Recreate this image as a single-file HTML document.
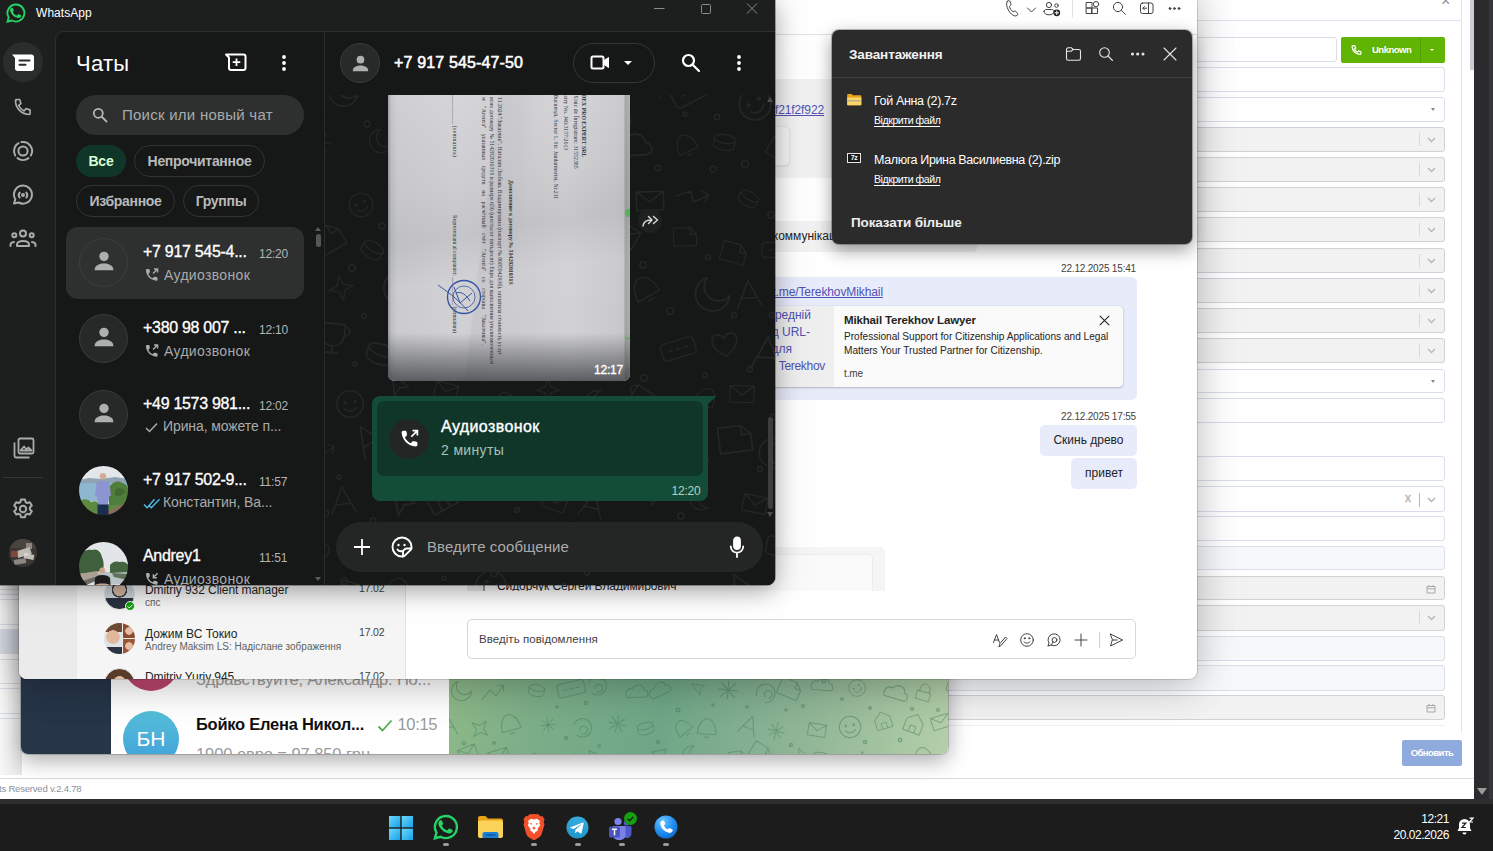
<!DOCTYPE html>
<html lang="ru">
<head>
<meta charset="utf-8">
<title>Desktop</title>
<style>
*{box-sizing:border-box;margin:0;padding:0}
html,body{width:1493px;height:851px;overflow:hidden;background:#fff}
body{position:relative;font-family:"Liberation Sans",sans-serif;color:#000}
.abs{position:absolute}
svg{display:block;overflow:visible}
/* ---------- CRM base page ---------- */
#crm{position:absolute;left:0;top:0;width:1493px;height:804px;background:#fff;overflow:hidden}
#crm .dark{position:absolute;left:1474px;top:0;width:19px;height:799px;background:linear-gradient(90deg,#2b2b2d 0,#2b2b2d 15px,#38383b 15px)}
#crm .sbthumb{position:absolute;left:1470px;top:0;width:4px;height:70px;background:#c9ccd6}
#crm .sbtrack{position:absolute;left:1462px;top:0;width:12px;height:799px;background:#fff}
#crm .pborder{position:absolute;left:1461px;top:0;width:1px;height:733px;background:#dfe4ee}
#crm .hline{position:absolute;left:1197px;top:20px;width:264px;height:1px;background:#dfe4ee}
.fld{position:absolute;left:900px;width:545px;border:1px solid #d9dfea;border-radius:3px;background:#fff}
.fld.g{background:#f2f2f2;border-color:#d0d2da}
.fld.l{background:#f7f8fa}
.fld .bar{position:absolute;right:24px;top:5px;width:1px;height:13px;background:#d9d9d9}
.fld .chev{position:absolute;right:8px;top:9px;width:9px;height:6px}
.fld .caret{position:absolute;right:9px;top:10px;width:0;height:0;border-left:2.500px solid transparent;border-right:2.500px solid transparent;border-top:3.500px solid #888}
.fld .cal{position:absolute;right:8px;top:7px;width:10px;height:10px}
#crm .foot{position:absolute;left:0;top:778px;width:1474px;height:1px;background:#d9dde6}
#crm .foottxt{position:absolute;left:-1px;top:783px;font-size:9.5px;color:#8a8f99;white-space:nowrap;letter-spacing:-0.2px}
#crm .tbl i{position:absolute;left:0;width:20px;height:1px;background:#dfe4ee;display:block}
/* ---------- taskbar ---------- */
#taskbar{position:absolute;left:0;top:799px;width:1493px;height:52px;background:#1c1c1c}
#taskbar .top{position:absolute;left:0;top:0;width:1493px;height:5px;background:#2e2e31}
#taskbar .pill{position:absolute;top:44px;width:6px;height:3px;border-radius:2px;background:#9a9a9a}
#taskbar .clock{position:absolute;right:44px;top:12px;text-align:right;font-size:12px;line-height:16px;color:#fff;letter-spacing:-0.45px}

#wa .nm{font-size:16px;color:#fff;white-space:nowrap;letter-spacing:-0.3px;-webkit-text-stroke:.32px #fff}
#wa .tm{font-size:12px;color:#b3b5b5;white-space:nowrap;letter-spacing:-0.2px}
#wa .sb{font-size:14px;color:#a9abab;white-space:nowrap;letter-spacing:-0.1px}
#wa .sb.c{letter-spacing:.33px}
</style>
</head>
<body>

<!-- ================= CRM base page ================= -->
<div id="crm">
  <div class="tbl">
    <i style="top:589px"></i><i style="top:594px"></i><i style="top:599px"></i><i style="top:624px"></i><i style="top:629px"></i><i style="top:659px"></i><i style="top:683px"></i><i style="top:688px"></i><i style="top:713px"></i><i style="top:718px"></i>
    <div class="abs" style="left:0;top:630px;width:20px;height:24px;background:#dfe3ec"></div>
    <div class="abs" style="left:0;top:560px;width:22px;height:215px;background:linear-gradient(90deg,rgba(0,0,0,.03),rgba(0,0,0,.10))"></div>
  </div>
  <div class="sbtrack"></div>
  <div class="pborder"></div>
  <div class="hline"></div>
  <div class="sbthumb"></div>
  <div class="dark"></div>
  <div class="abs" style="left:1441px;top:-8px;font-size:16px;color:#8a8f99">×</div>

  <div class="fld" style="top:37px;height:25px;width:437px"></div>
  <div class="abs" id="unk" style="left:1341px;top:37px;width:104px;height:26px;background:#5fb404;border-radius:2px">
    <svg class="abs" style="left:8.500px;top:6.500px" width="12.500" height="12.500" viewBox="0 0 24 24" fill="none" stroke="#fff" stroke-width="2.400" stroke-linecap="round" stroke-linejoin="round"><path d="M6 3h3l2 5-2.5 1.5a11 11 0 0 0 6 6L16 13l5 2v3a2 2 0 0 1-2 2A16 16 0 0 1 4 5a2 2 0 0 1 2-2z"/></svg>
    <span class="abs" style="left:31px;top:6.5px;font-size:9.5px;font-weight:bold;color:#fff;letter-spacing:-0.5px">Unknown</span>
    <div class="abs" style="left:79px;top:0;width:1px;height:26px;background:#54a003"></div>
    <div class="abs" style="left:88.500px;top:12px;width:0;height:0;border-left:2.500px solid transparent;border-right:2.500px solid transparent;border-top:2.500px solid #fff"></div>
  </div>
  <div class="fld" style="top:67px;height:25px"></div>
  <div class="fld" style="top:97px;height:25px"><div class="caret"></div></div>
  <div class="fld g" style="top:127px;height:25px"><div class="bar"></div><svg class="chev" viewBox="0 0 9 6"><path d="M1 1l3.5 3.5L8 1" fill="none" stroke="#b5b5b5" stroke-width="1.3"/></svg></div>
  <div class="fld g" style="top:157px;height:25px"><div class="bar"></div><svg class="chev" viewBox="0 0 9 6"><path d="M1 1l3.5 3.5L8 1" fill="none" stroke="#b5b5b5" stroke-width="1.3"/></svg></div>
  <div class="fld g" style="top:187px;height:25px"><div class="bar"></div><svg class="chev" viewBox="0 0 9 6"><path d="M1 1l3.5 3.5L8 1" fill="none" stroke="#b5b5b5" stroke-width="1.3"/></svg></div>
  <div class="fld g" style="top:217px;height:25px"><div class="bar"></div><svg class="chev" viewBox="0 0 9 6"><path d="M1 1l3.5 3.5L8 1" fill="none" stroke="#b5b5b5" stroke-width="1.3"/></svg></div>
  <div class="fld g" style="top:248px;height:25px"><div class="bar"></div><svg class="chev" viewBox="0 0 9 6"><path d="M1 1l3.5 3.5L8 1" fill="none" stroke="#b5b5b5" stroke-width="1.3"/></svg></div>
  <div class="fld g" style="top:278px;height:25px"><div class="bar"></div><svg class="chev" viewBox="0 0 9 6"><path d="M1 1l3.5 3.5L8 1" fill="none" stroke="#b5b5b5" stroke-width="1.3"/></svg></div>
  <div class="fld g" style="top:308px;height:25px"><div class="bar"></div><svg class="chev" viewBox="0 0 9 6"><path d="M1 1l3.5 3.5L8 1" fill="none" stroke="#b5b5b5" stroke-width="1.3"/></svg></div>
  <div class="fld g" style="top:338px;height:25px"><div class="bar"></div><svg class="chev" viewBox="0 0 9 6"><path d="M1 1l3.5 3.5L8 1" fill="none" stroke="#b5b5b5" stroke-width="1.3"/></svg></div>
  <div class="fld" style="top:369px;height:24px"><div class="caret"></div></div>
  <div class="fld" style="top:398px;height:25px"></div>
  <div class="fld" style="top:456px;height:25px"></div>
  <div class="fld" style="top:486px;height:26px"><span class="abs" style="right:33px;top:4px;font-size:12px;color:#b0b0b0;-webkit-text-stroke:.3px #b0b0b0">x</span><div class="bar" style="background:#b5b5b5;top:6px;height:14px"></div><svg class="chev" style="top:10px" viewBox="0 0 9 6"><path d="M1 1l3.500 3.500L8 1" fill="none" stroke="#b0b0b0" stroke-width="1.300"/></svg></div>
  <div class="fld" style="top:516px;height:25px"></div>
  <div class="fld l" style="top:546px;height:24px"></div>
  <div class="fld g" style="top:576px;height:24px"><svg class="cal" viewBox="0 0 10 10"><path d="M1 2.5h8v6.5h-8zM1 4.8h8M3 1v2M7 1v2" fill="none" stroke="#a8a8a8" stroke-width="1"/></svg></div>
  <div class="fld g" style="top:605px;height:26px"><div class="bar"></div><svg class="chev" viewBox="0 0 9 6"><path d="M1 1l3.5 3.5L8 1" fill="none" stroke="#b5b5b5" stroke-width="1.3"/></svg></div>
  <div class="fld l" style="top:636px;height:25px"></div>
  <div class="fld l" style="top:665px;height:26px"></div>
  <div class="fld g" style="top:695px;height:25px"><svg class="cal" viewBox="0 0 10 10"><path d="M1 2.5h8v6.5h-8zM1 4.8h8M3 1v2M7 1v2" fill="none" stroke="#a8a8a8" stroke-width="1"/></svg></div>
  <div class="abs" style="left:900px;top:725px;width:545px;height:1px;background:#eef0f5"></div>

  <div class="abs" style="left:1402px;top:740px;width:60px;height:26px;background:#8faadc;border-radius:2px;color:#fff;font-size:9.5px;font-weight:bold;text-align:center;line-height:26px;letter-spacing:-0.55px">Обновить</div>
  <div class="foot"></div>
  <div class="foottxt">ts Reserved v.2.4.78</div>
  <div class="abs" style="left:1477px;top:788px;width:0;height:0;border-left:5px solid transparent;border-right:5px solid transparent;border-top:7px solid #9a9a9a"></div>
</div>

<!-- ================= Taskbar ================= -->
<div id="taskbar">
  <div class="top"></div>
  <div class="pill" style="left:443px"></div>
  <div class="pill" style="left:531px"></div>
  <div class="pill" style="left:575px"></div>
  <div class="pill" style="left:619px"></div>
  <div class="pill" style="left:663px"></div>
  <!-- start -->
  <svg class="abs" style="left:389px;top:17px" width="24" height="24" viewBox="0 0 24 24"><defs><linearGradient id="wg" x1="0" y1="0" x2="1" y2="1"><stop offset="0" stop-color="#6fd8fb"/><stop offset="1" stop-color="#14a0ea"/></linearGradient></defs><rect x="0" y="0" width="11.300" height="11.300" fill="url(#wg)"/><rect x="12.700" y="0" width="11.300" height="11.300" fill="url(#wg)"/><rect x="0" y="12.700" width="11.300" height="11.300" fill="url(#wg)"/><rect x="12.700" y="12.700" width="11.300" height="11.300" fill="url(#wg)"/></svg>
  <!-- whatsapp -->
  <svg class="abs" style="left:433px;top:15px" width="26" height="26" viewBox="0 0 24 24"><path d="M12 1.800a10.200 10.200 0 0 0-8.800 15.400l-1.400 5.200 5.300-1.400a10.200 10.200 0 1 0 4.900-19.200z" fill="none" stroke="#25d366" stroke-width="2.200"/><path d="M8.700 6.600c-.3-.6-.5-.6-.8-.6h-.7c-.3 0-.7.100-1 .5-.4.400-1.300 1.300-1.300 3.100s1.300 3.600 1.500 3.800c.2.300 2.600 4.100 6.400 5.600 3.100 1.200 3.800 1 4.400.9.700-.1 2.200-.9 2.500-1.700.3-.9.300-1.600.2-1.700-.1-.2-.3-.300-.700-.500l-2.500-1.200c-.4-.1-.6-.2-.9.200l-1.200 1.500c-.2.200-.4.300-.8.100-2.200-1.100-3.600-2-5-4.500-.4-.6.400-.6 1.100-2 .1-.2.100-.5 0-.7z" fill="#25d366" transform="translate(.6,.4) scale(.88)"/></svg>
  <!-- explorer -->
  <svg class="abs" style="left:478px;top:17px" width="25" height="22" viewBox="0 0 25 22"><path d="M0 2c0-1 .8-2 2-2h5.500l2.500 2.500h13c1.100 0 2 .9 2 2v3.500h-25z" fill="#e8a317"/><path d="M0 6.500c0-1.100.9-2 2-2h21c1.100 0 2 .9 2 2v13.500c0 1.100-.9 2-2 2h-21c-1.100 0-2-.9-2-2z" fill="#fbd35a"/><path d="M4.500 18c0-1.100.9-2 2-2h12c1.100 0 2 .9 2 2v4h-16z" fill="#1b7fd3"/><rect x="7.500" y="18.300" width="10" height="1.400" rx=".7" fill="#0c5aa6"/></svg>
  <!-- brave -->
  <svg class="abs" style="left:523px;top:15px" width="22" height="26" viewBox="0 0 22 26"><path d="M11 0l4.500.3 1.800 2 2-.3 2.200 3.300-.8 2.700.8 2.600-2.800 9.400c-.5 1.500-1.500 2.700-2.800 3.500l-3.700 2.300c-.7.400-1.600.4-2.400 0l-3.700-2.300c-1.300-.8-2.300-2-2.800-3.500l-2.800-9.400.8-2.600-.8-2.700 2.200-3.300 2 .3 1.800-2z" fill="#f0502a"/><path d="M11 5.500l3-.8 3 2.300-.7 2.300.9 2.300-2.700 3.100.3 1.900-2.300 1.500-1.500 1.900-1.500-1.900-2.300-1.500.3-1.900-2.700-3.100.9-2.300-.7-2.300 3-2.300z" fill="#fff"/><path d="M11 12.500l1.800 1.800-1.800 1.200-1.800-1.200zM6.800 9l2.400.6-.9 1.500zM15.200 9l-2.400.6.900 1.500z" fill="#f0502a"/></svg>
  <!-- telegram -->
  <svg class="abs" style="left:566px;top:17px" width="23" height="23" viewBox="0 0 24 24"><defs><linearGradient id="tgg" x1="0" y1="0" x2="0" y2="1"><stop offset="0" stop-color="#37aee2"/><stop offset="1" stop-color="#1e96c8"/></linearGradient></defs><circle cx="12" cy="12" r="11.500" fill="url(#tgg)"/><path d="M5 11.800l12.500-4.900c.6-.2 1.100.1.900.9l-2.100 10c-.2.700-.6.900-1.200.5l-3.200-2.400-1.600 1.500c-.2.200-.3.300-.7.300l.2-3.300 6-5.400c.3-.2-.1-.4-.4-.2l-7.400 4.700-3.200-1c-.7-.2-.7-.7.200-1z" fill="#fff"/></svg>
  <!-- teams -->
  <svg class="abs" style="left:609px;top:13px" width="30" height="28" viewBox="0 0 30 28"><circle cx="9" cy="9.500" r="3.600" fill="#7b83eb"/><circle cx="17.500" cy="11" r="2.600" fill="#5059c9"/><path d="M13 14h8c.8 0 1.500.7 1.500 1.500v6c0 2.500-2 4.500-4.500 4.500s-5-2-5-4.500z" fill="#5059c9"/><path d="M4 14h11c.8 0 1.500.7 1.500 1.500v7.500c0 3-2.500 5-6.200 5s-6.300-2-6.300-5z" fill="#7b83eb"/><rect x="0" y="14.500" width="11" height="11" rx="1.500" fill="#4b53bc"/><path d="M3 17.300h5M5.500 17.300v6" stroke="#fff" stroke-width="1.500" fill="none"/><circle cx="21.500" cy="6.500" r="6.500" fill="#13a10e"/><path d="M18.700 6.700l2 2 3.600-4" stroke="#1c1c1c" stroke-width="1.300" fill="none"/></svg>
  <!-- phone link -->
  <svg class="abs" style="left:654px;top:16px" width="24" height="24" viewBox="0 0 24 24"><defs><radialGradient id="plg" cx=".35" cy=".25" r=".9"><stop offset="0" stop-color="#6cc4ff"/><stop offset=".55" stop-color="#1f8df0"/><stop offset="1" stop-color="#0a5fc4"/></radialGradient></defs><circle cx="12" cy="12" r="11.500" fill="url(#plg)"/><path d="M8.500 5.500c.8-.3 1.500 0 1.800.7l.8 2c.2.600 0 1.200-.4 1.600l-.8.700c.7 1.700 2 3.100 3.700 3.900l.8-.8c.4-.4 1-.5 1.600-.3l2 .9c.7.300 1 1.100.6 1.800-.9 1.700-2.700 2.300-4.600 1.600-4-1.500-6.700-4.500-7.600-8.200-.4-1.600.4-3.200 2.100-3.900z" fill="#fff"/></svg>
  <!-- bell -->
  <svg class="abs" style="left:1457px;top:18px" width="18" height="19" viewBox="0 0 18 19"><path d="M7.500 2a5.500 5.500 0 0 0-5.500 5.500v3.500l-1.500 3h14l-1.500-3v-3.500a5.500 5.500 0 0 0-5.500-5.500z" fill="#fff"/><path d="M5.500 15.500a2 2 0 0 0 4 0z" fill="#fff"/><path d="M5 6.200h3.800l-3.800 4.300h3.800" stroke="#1c1c1c" stroke-width="1.200" fill="none"/><path d="M12.500 1.200h3.500l-3.500 3.800h3.500" stroke="#fff" stroke-width="1.200" fill="none"/></svg>
  <div class="clock">12:21<br>20.02.2026</div>
</div>

<!-- ================= Telegram window ================= -->
<div id="tg" class="abs" style="left:21px;top:560px;width:927px;height:194px;border-radius:0 0 7px 7px;overflow:hidden;box-shadow:0 0 0 1px rgba(0,0,0,.18),0 6px 22px rgba(0,0,0,.35);background:#fff;font-family:'Liberation Sans',sans-serif">
  <div class="abs" style="left:0;top:0;width:90px;height:194px;background:#263548"></div>
  <div class="abs" style="left:90px;top:0;width:338px;height:194px;background:#fff"></div>
  <div class="abs" style="left:102px;top:75px;width:56px;height:56px;border-radius:50%;background:linear-gradient(#d45a7a,#b8436a)"></div>
  <div class="abs" style="left:175px;top:110px;font-size:16.5px;color:#9b9b9b;white-space:nowrap;letter-spacing:-0.19px">Здравствуйте, Александр. Но...</div>
  <div class="abs" style="left:102px;top:151px;width:56px;height:56px;border-radius:50%;background:linear-gradient(#56bfd8,#3f9fdb);color:#fff;font-size:21px;text-align:center;line-height:55px;letter-spacing:0">БН</div>
  <div class="abs" style="left:175px;top:155px;font-size:16.5px;font-weight:bold;color:#111;white-space:nowrap;letter-spacing:-0.25px">Бойко Елена Никол...</div>
  <svg class="abs" style="left:356px;top:159px" width="16" height="13" viewBox="0 0 16 13"><path d="M1.5 7.5l4 4L14.5 1.5" fill="none" stroke="#4fae4e" stroke-width="1.8"/></svg>
  <div class="abs" style="left:376.5px;top:155px;font-size:16.5px;color:#9a9a9a;white-space:nowrap;letter-spacing:-0.35px">10:15</div>
  <div class="abs" style="left:175px;top:184.5px;font-size:16.5px;color:#9b9b9b;white-space:nowrap;letter-spacing:-0.08px">1900 евро = 97 850 грн</div>
  <div class="abs" id="tgbg" style="left:428px;top:0;width:499px;height:194px;overflow:hidden;background:linear-gradient(100deg,#93bb88 0%,#7bad88 22%,#6fa687 45%,#8fb596 72%,#b4cfa8 100%)">
    <svg style="overflow:hidden" width="499" height="194" viewBox="0 0 499 194" fill="none" stroke="#47805f" stroke-opacity=".5" stroke-width="1.400" stroke-linecap="round" stroke-linejoin="round">
<path transform="translate(-15 3) rotate(-37) scale(0.81)" d="M-12 0a12 5 0 1 0 24 0a12 5 0 1 0-24 0M-12 0v8a12 5 0 0 0 24 0v-8"/>
<path transform="translate(13 -6) rotate(-26) scale(0.69)" d="M-8 -2v-5a8 8 0 0 1 16 0v5M-11 -2h22v14h-22z"/>
<path transform="translate(48 -5) rotate(-39) scale(0.78)" d="M6 -14a14 14 0 1 0 8 22a11 11 0 0 1-8-22z"/>
<circle cx="62" cy="14" r="1.3"/>
<path transform="translate(86 -6) rotate(-24) scale(0.63)" d="M-14 4l10-12 8 8 10-14M14 -14v8M14 -14h-8"/>
<path transform="translate(109 4) rotate(-19) scale(0.67)" d="M-8 -2v-5a8 8 0 0 1 16 0v5M-11 -2h22v14h-22z"/>
<path transform="translate(149 2) rotate(-17) scale(0.84)" d="M-12 12l12-26 12 26M-7 3h14"/>
<circle cx="169" cy="22" r="1.2"/>
<path transform="translate(180 -4) rotate(-7) scale(0.62)" d="M-14 6c-4-8 2-14 8-12 4-8 16-6 16 2 6 0 8 10 0 10z"/>
<circle cx="197" cy="8" r="1.5"/>
<path transform="translate(212 -3) rotate(21) scale(0.77)" d="M-12 8c0-12 6-20 12-20s12 8 12 20zM-12 8h24M-3 12h6"/>
<circle cx="229" cy="11" r="1.2"/>
<path transform="translate(253 6) rotate(11) scale(0.60)" d="M0 -13a13 13 0 1 0 .1 0M-5 -3a1 1 0 1 0 .1 0M5 -3a1 1 0 1 0 .1 0M-6 4c3 4 9 4 12 0"/>
<path transform="translate(279 1) rotate(17) scale(0.61)" d="M-12 -6a12 12 0 1 1 4 14M-4 2a5 5 0 1 1 3 4"/>
<circle cx="299" cy="15" r="1.6"/>
<path transform="translate(319 6) rotate(25) scale(0.69)" d="M0 -13a13 13 0 1 0 .1 0M-5 -3a1 1 0 1 0 .1 0M5 -3a1 1 0 1 0 .1 0M-6 4c3 4 9 4 12 0"/>
<circle cx="338" cy="19" r="1.6"/>
<path transform="translate(350 5) rotate(15) scale(0.84)" d="M0 -14l3.500 10.500 10.500 3.500-10.500 3.500-3.500 10.500-3.500-10.500-10.500-3.500 10.500-3.500z"/>
<circle cx="366" cy="22" r="1.7"/>
<path transform="translate(377 6) rotate(-29) scale(0.68)" d="M0 -12v24M-12 0h24M-8 -8l16 16M8 -8l-16 16"/>
<circle cx="391" cy="19" r="1.1"/>
<path transform="translate(415 7) rotate(-34) scale(0.62)" d="M-8 -2v-5a8 8 0 0 1 16 0v5M-11 -2h22v14h-22z"/>
<circle cx="435" cy="19" r="1.6"/>
<path transform="translate(443 -3) rotate(-22) scale(0.61)" d="M-12 12v-16l12-10 12 10v16zM-4 12v-9h8v9"/>
<path transform="translate(472 -0) rotate(-24) scale(0.85)" d="M-12 12l12-26 12 26M-7 3h14"/>
<circle cx="486" cy="20" r="1.3"/>
<path transform="translate(507 -2) rotate(13) scale(0.67)" d="M0 -14l3.500 10.500 10.500 3.500-10.500 3.500-3.500 10.500-3.500-10.500-10.500-3.500 10.500-3.500z"/>
<circle cx="528" cy="18" r="1.8"/>
<path transform="translate(-1 33) rotate(21) scale(0.67)" d="M-13 -9h26v18h-26zM-13 -9l13 10 13-10"/>
<circle cx="19" cy="46" r="1.7"/>
<path transform="translate(33 29) rotate(3) scale(0.65)" d="M-10 -10l20 6-8 4-2 10z"/>
<circle cx="50" cy="46" r="1.4"/>
<path transform="translate(60 37) rotate(35) scale(0.77)" d="M0 -13a13 13 0 1 0 .1 0M-5 -3a1 1 0 1 0 .1 0M5 -3a1 1 0 1 0 .1 0M-6 4c3 4 9 4 12 0"/>
<path transform="translate(97 36) rotate(22) scale(0.67)" d="M-14 -10h20l8 8v14h-28zM6 -10v8h8"/>
<path transform="translate(135 39) rotate(-18) scale(0.75)" d="M-13 -9h26v18h-26zM-13 -9l13 10 13-10"/>
<circle cx="152" cy="54" r="1.5"/>
<path transform="translate(165 37) rotate(4) scale(0.67)" d="M0 -13a13 13 0 1 0 .1 0M-5 -3a1 1 0 1 0 .1 0M5 -3a1 1 0 1 0 .1 0M-6 4c3 4 9 4 12 0"/>
<circle cx="185" cy="53" r="1.7"/>
<path transform="translate(194 38) rotate(6) scale(0.84)" d="M-14 4l10-12 8 8 10-14M14 -14v8M14 -14h-8"/>
<circle cx="210" cy="52" r="1.7"/>
<path transform="translate(237 33) rotate(13) scale(0.64)" d="M-14 -8h28a4 4 0 0 1 4 4v10a4 4 0 0 1-4 4h-28a4 4 0 0 1-4-4v-10a4 4 0 0 1 4-4zM-10 1h4M-2 1h4M6 1h4"/>
<path transform="translate(265 35) rotate(-2) scale(0.76)" d="M-12 12v-16l12-10 12 10v16zM-4 12v-9h8v9"/>
<path transform="translate(299 36) rotate(-15) scale(0.64)" d="M-12 -6a12 12 0 1 1 4 14M-4 2a5 5 0 1 1 3 4"/>
<circle cx="317" cy="50" r="1.5"/>
<path transform="translate(332 27) rotate(-12) scale(0.64)" d="M-10 -10l20 6-8 4-2 10z"/>
<path transform="translate(358 39) rotate(-16) scale(0.74)" d="M-10 -10l20 6-8 4-2 10z"/>
<circle cx="373" cy="57" r="1.1"/>
<path transform="translate(392 36) rotate(-40) scale(0.69)" d="M0 -13a13 13 0 1 0 .1 0M-5 -3a1 1 0 1 0 .1 0M5 -3a1 1 0 1 0 .1 0M-6 4c3 4 9 4 12 0"/>
<path transform="translate(434 38) rotate(7) scale(0.84)" d="M0 -12v24M-12 0h24M-8 -8l16 16M8 -8l-16 16"/>
<circle cx="449" cy="53" r="1.4"/>
<path transform="translate(468 30) rotate(-24) scale(0.70)" d="M0 -13a13 13 0 1 0 .1 0M-5 -3a1 1 0 1 0 .1 0M5 -3a1 1 0 1 0 .1 0M-6 4c3 4 9 4 12 0"/>
<path transform="translate(497 31) rotate(-20) scale(0.75)" d="M-14 6c-4-8 2-14 8-12 4-8 16-6 16 2 6 0 8 10 0 10z"/>
<circle cx="517" cy="52" r="1.5"/>
<path transform="translate(526 38) rotate(8) scale(0.63)" d="M-12 -6a12 12 0 1 1 4 14M-4 2a5 5 0 1 1 3 4"/>
<circle cx="543" cy="52" r="1.5"/>
<path transform="translate(-11 64) rotate(-12) scale(0.72)" d="M-12 12v-16l12-10 12 10v16zM-4 12v-9h8v9"/>
<circle cx="7" cy="80" r="1.7"/>
<path transform="translate(12 67) rotate(23) scale(0.66)" d="M-12 8c0-12 6-20 12-20s12 8 12 20zM-12 8h24M-3 12h6"/>
<circle cx="32" cy="82" r="1.7"/>
<path transform="translate(45 60) rotate(-9) scale(0.67)" d="M-14 4l10-12 8 8 10-14M14 -14v8M14 -14h-8"/>
<path transform="translate(87 60) rotate(31) scale(0.67)" d="M0 -12v24M-12 0h24M-8 -8l16 16M8 -8l-16 16"/>
<path transform="translate(119 63) rotate(-21) scale(0.78)" d="M-14 -10h20l8 8v14h-28zM6 -10v8h8"/>
<circle cx="136" cy="83" r="1.4"/>
<path transform="translate(153 71) rotate(-38) scale(0.79)" d="M0 10c-14-8-14-20-6-20 4 0 6 4 6 4s2-4 6-4c8 0 8 12-6 20z"/>
<circle cx="170" cy="86" r="1.2"/>
<path transform="translate(182 66) rotate(35) scale(0.63)" d="M0 -13a13 13 0 1 0 .1 0M-5 -3a1 1 0 1 0 .1 0M5 -3a1 1 0 1 0 .1 0M-6 4c3 4 9 4 12 0"/>
<circle cx="199" cy="84" r="1.1"/>
<path transform="translate(217 62) rotate(14) scale(0.75)" d="M-12 12v-16l12-10 12 10v16zM-4 12v-9h8v9"/>
<circle cx="237" cy="80" r="1.7"/>
<path transform="translate(252 66) rotate(-3) scale(0.72)" d="M-12 12l12-26 12 26M-7 3h14"/>
<path transform="translate(278 59) rotate(34) scale(0.67)" d="M-12 12v-16l12-10 12 10v16zM-4 12v-9h8v9"/>
<path transform="translate(319 61) rotate(30) scale(0.82)" d="M-10 -10l20 6-8 4-2 10z"/>
<path transform="translate(347 65) rotate(-34) scale(0.62)" d="M0 -12v24M-12 0h24M-8 -8l16 16M8 -8l-16 16"/>
<circle cx="366" cy="84" r="1.5"/>
<path transform="translate(373 69) rotate(11) scale(0.78)" d="M-14 -8h28a4 4 0 0 1 4 4v10a4 4 0 0 1-4 4h-28a4 4 0 0 1-4-4v-10a4 4 0 0 1 4-4zM-10 1h4M-2 1h4M6 1h4"/>
<circle cx="392" cy="83" r="1.5"/>
<path transform="translate(418 69) rotate(-3) scale(0.78)" d="M-14 6c-4-8 2-14 8-12 4-8 16-6 16 2 6 0 8 10 0 10z"/>
<circle cx="432" cy="83" r="1.6"/>
<path transform="translate(440 62) rotate(-27) scale(0.77)" d="M0 -12v24M-12 0h24M-8 -8l16 16M8 -8l-16 16"/>
<path transform="translate(476 67) rotate(11) scale(0.82)" d="M0 10c-14-8-14-20-6-20 4 0 6 4 6 4s2-4 6-4c8 0 8 12-6 20z"/>
<circle cx="492" cy="82" r="1.5"/>
<path transform="translate(511 72) rotate(-33) scale(0.63)" d="M0 -13a13 13 0 1 0 .1 0M-5 -3a1 1 0 1 0 .1 0M5 -3a1 1 0 1 0 .1 0M-6 4c3 4 9 4 12 0"/>
<circle cx="528" cy="90" r="1.2"/>
<path transform="translate(6 100) rotate(-7) scale(0.62)" d="M6 -14a14 14 0 1 0 8 22a11 11 0 0 1-8-22z"/>
<circle cx="25" cy="114" r="1.8"/>
<path transform="translate(37 104) rotate(9) scale(0.64)" d="M-14 4l10-12 8 8 10-14M14 -14v8M14 -14h-8"/>
<path transform="translate(68 94) rotate(-29) scale(0.82)" d="M0 -14l3.500 10.500 10.500 3.500-10.500 3.500-3.500 10.500-3.500-10.500-10.500-3.500 10.500-3.500z"/>
<circle cx="84" cy="109" r="1.4"/>
<path transform="translate(105 94) rotate(-37) scale(0.74)" d="M-12 0a12 5 0 1 0 24 0a12 5 0 1 0-24 0M-12 0v8a12 5 0 0 0 24 0v-8"/>
<circle cx="124" cy="114" r="1.3"/>
<path transform="translate(136 102) rotate(22) scale(0.81)" d="M-14 -8h28a4 4 0 0 1 4 4v10a4 4 0 0 1-4 4h-28a4 4 0 0 1-4-4v-10a4 4 0 0 1 4-4zM-10 1h4M-2 1h4M6 1h4"/>
<circle cx="153" cy="118" r="1.2"/>
<path transform="translate(163 101) rotate(9) scale(0.69)" d="M0 -13a13 13 0 1 0 .1 0M-5 -3a1 1 0 1 0 .1 0M5 -3a1 1 0 1 0 .1 0M-6 4c3 4 9 4 12 0"/>
<path transform="translate(196 96) rotate(6) scale(0.73)" d="M-12 12v-16l12-10 12 10v16zM-4 12v-9h8v9"/>
<circle cx="213" cy="115" r="1.3"/>
<path transform="translate(226 93) rotate(-15) scale(0.61)" d="M-12 12l12-26 12 26M-7 3h14"/>
<path transform="translate(264 102) rotate(14) scale(0.72)" d="M-12 -6a12 12 0 1 1 4 14M-4 2a5 5 0 1 1 3 4"/>
<path transform="translate(299 98) rotate(19) scale(0.62)" d="M-14 4l10-12 8 8 10-14M14 -14v8M14 -14h-8"/>
<circle cx="312" cy="114" r="1.3"/>
<path transform="translate(335 94) rotate(-26) scale(0.67)" d="M-14 -10h20l8 8v14h-28zM6 -10v8h8"/>
<circle cx="350" cy="109" r="1.4"/>
<path transform="translate(357 105) rotate(0) scale(0.83)" d="M0 -13a13 13 0 1 0 .1 0M-5 -3a1 1 0 1 0 .1 0M5 -3a1 1 0 1 0 .1 0M-6 4c3 4 9 4 12 0"/>
<circle cx="375" cy="121" r="1.8"/>
<path transform="translate(391 101) rotate(18) scale(0.77)" d="M-12 8c0-12 6-20 12-20s12 8 12 20zM-12 8h24M-3 12h6"/>
<path transform="translate(425 95) rotate(33) scale(0.66)" d="M-12 -6a12 12 0 1 1 4 14M-4 2a5 5 0 1 1 3 4"/>
<circle cx="440" cy="115" r="1.3"/>
<path transform="translate(460 99) rotate(-32) scale(0.78)" d="M-12 8c0-12 6-20 12-20s12 8 12 20zM-12 8h24M-3 12h6"/>
<path transform="translate(491 96) rotate(-35) scale(0.76)" d="M-12 12l12-26 12 26M-7 3h14"/>
<circle cx="511" cy="108" r="1.0"/>
<path transform="translate(532 98) rotate(-36) scale(0.74)" d="M0 -14l3.500 10.500 10.500 3.500-10.500 3.500-3.500 10.500-3.500-10.500-10.500-3.500 10.500-3.500z"/>
<path transform="translate(-16 130) rotate(-31) scale(0.66)" d="M0 10c-14-8-14-20-6-20 4 0 6 4 6 4s2-4 6-4c8 0 8 12-6 20z"/>
<path transform="translate(11 132) rotate(-34) scale(0.72)" d="M6 -14a14 14 0 1 0 8 22a11 11 0 0 1-8-22z"/>
<path transform="translate(44 136) rotate(-1) scale(0.76)" d="M-14 4l10-12 8 8 10-14M14 -14v8M14 -14h-8"/>
<path transform="translate(88 128) rotate(11) scale(0.65)" d="M-12 0a12 5 0 1 0 24 0a12 5 0 1 0-24 0M-12 0v8a12 5 0 0 0 24 0v-8"/>
<circle cx="108" cy="147" r="1.1"/>
<path transform="translate(122 128) rotate(-13) scale(0.76)" d="M-14 -8h28a4 4 0 0 1 4 4v10a4 4 0 0 1-4 4h-28a4 4 0 0 1-4-4v-10a4 4 0 0 1 4-4zM-10 1h4M-2 1h4M6 1h4"/>
<circle cx="137" cy="143" r="1.6"/>
<path transform="translate(149 127) rotate(-1) scale(0.77)" d="M-12 -6a12 12 0 1 1 4 14M-4 2a5 5 0 1 1 3 4"/>
<path transform="translate(188 133) rotate(-1) scale(0.72)" d="M-14 6c-4-8 2-14 8-12 4-8 16-6 16 2 6 0 8 10 0 10z"/>
<path transform="translate(211 131) rotate(-24) scale(0.73)" d="M-14 6c-4-8 2-14 8-12 4-8 16-6 16 2 6 0 8 10 0 10z"/>
<circle cx="229" cy="150" r="1.8"/>
<path transform="translate(250 129) rotate(-9) scale(0.61)" d="M-10 -10l20 6-8 4-2 10z"/>
<circle cx="264" cy="145" r="1.1"/>
<path transform="translate(279 130) rotate(-40) scale(0.82)" d="M0 -12v24M-12 0h24M-8 -8l16 16M8 -8l-16 16"/>
<circle cx="298" cy="147" r="1.4"/>
<path transform="translate(318 134) rotate(-34) scale(0.78)" d="M-12 -6a12 12 0 1 1 4 14M-4 2a5 5 0 1 1 3 4"/>
<circle cx="337" cy="150" r="1.1"/>
<path transform="translate(341 128) rotate(23) scale(0.77)" d="M-14 -10h20l8 8v14h-28zM6 -10v8h8"/>
<circle cx="354" cy="146" r="1.4"/>
<path transform="translate(373 126) rotate(5) scale(0.71)" d="M-14 6c-4-8 2-14 8-12 4-8 16-6 16 2 6 0 8 10 0 10z"/>
<circle cx="393" cy="139" r="1.4"/>
<path transform="translate(408 128) rotate(-39) scale(0.64)" d="M0 -13a13 13 0 1 0 .1 0M-5 -3a1 1 0 1 0 .1 0M5 -3a1 1 0 1 0 .1 0M-6 4c3 4 9 4 12 0"/>
<circle cx="421" cy="148" r="1.2"/>
<path transform="translate(447 134) rotate(17) scale(0.79)" d="M-14 6c-4-8 2-14 8-12 4-8 16-6 16 2 6 0 8 10 0 10z"/>
<circle cx="463" cy="149" r="1.4"/>
<path transform="translate(475 133) rotate(16) scale(0.61)" d="M-8 -2v-5a8 8 0 0 1 16 0v5M-11 -2h22v14h-22z"/>
<circle cx="489" cy="150" r="1.4"/>
<path transform="translate(505 127) rotate(-34) scale(0.65)" d="M-12 12v-16l12-10 12 10v16zM-4 12v-9h8v9"/>
<circle cx="525" cy="141" r="1.6"/>
<path transform="translate(-2 165) rotate(-5) scale(0.81)" d="M-12 12l12-26 12 26M-7 3h14"/>
<circle cx="15" cy="183" r="1.6"/>
<path transform="translate(31 169) rotate(39) scale(0.72)" d="M0 -14l3.500 10.500 10.500 3.500-10.500 3.500-3.500 10.500-3.500-10.500-10.500-3.500 10.500-3.500z"/>
<circle cx="45" cy="183" r="1.3"/>
<path transform="translate(61 164) rotate(-15) scale(0.80)" d="M-12 8c0-12 6-20 12-20s12 8 12 20zM-12 8h24M-3 12h6"/>
<path transform="translate(99 165) rotate(39) scale(0.62)" d="M0 -12v24M-12 0h24M-8 -8l16 16M8 -8l-16 16"/>
<circle cx="117" cy="178" r="1.5"/>
<path transform="translate(134 169) rotate(0) scale(0.77)" d="M-12 -6a12 12 0 1 1 4 14M-4 2a5 5 0 1 1 3 4"/>
<circle cx="150" cy="186" r="1.4"/>
<path transform="translate(168 164) rotate(-33) scale(0.73)" d="M0 -12v24M-12 0h24M-8 -8l16 16M8 -8l-16 16"/>
<path transform="translate(196 166) rotate(-14) scale(0.67)" d="M-12 0a12 5 0 1 0 24 0a12 5 0 1 0-24 0M-12 0v8a12 5 0 0 0 24 0v-8"/>
<circle cx="209" cy="182" r="1.5"/>
<path transform="translate(234 168) rotate(-39) scale(0.67)" d="M-12 8c0-12 6-20 12-20s12 8 12 20zM-12 8h24M-3 12h6"/>
<path transform="translate(258 168) rotate(4) scale(0.77)" d="M-12 8c0-12 6-20 12-20s12 8 12 20zM-12 8h24M-3 12h6"/>
<path transform="translate(300 166) rotate(21) scale(0.73)" d="M-12 12l12-26 12 26M-7 3h14"/>
<path transform="translate(327 171) rotate(14) scale(0.70)" d="M0 -12v24M-12 0h24M-8 -8l16 16M8 -8l-16 16"/>
<circle cx="342" cy="185" r="1.5"/>
<path transform="translate(368 170) rotate(9) scale(0.68)" d="M-13 -9h26v18h-26zM-13 -9l13 10 13-10"/>
<path transform="translate(401 167) rotate(-9) scale(0.82)" d="M0 -13a13 13 0 1 0 .1 0M-5 -3a1 1 0 1 0 .1 0M5 -3a1 1 0 1 0 .1 0M-6 4c3 4 9 4 12 0"/>
<circle cx="416" cy="182" r="1.5"/>
<path transform="translate(434 161) rotate(-17) scale(0.66)" d="M-12 12v-16l12-10 12 10v16zM-4 12v-9h8v9"/>
<circle cx="451" cy="180" r="1.7"/>
<path transform="translate(465 164) rotate(21) scale(0.73)" d="M-12 12v-16l12-10 12 10v16zM-4 12v-9h8v9"/>
<path transform="translate(492 162) rotate(-17) scale(0.71)" d="M-13 -9h26v18h-26zM-13 -9l13 10 13-10"/>
<circle cx="507" cy="179" r="1.5"/>
<path transform="translate(527 163) rotate(2) scale(0.78)" d="M0 10c-14-8-14-20-6-20 4 0 6 4 6 4s2-4 6-4c8 0 8 12-6 20z"/>
<circle cx="544" cy="182" r="1.8"/>
<path transform="translate(-19 203) rotate(-11) scale(0.82)" d="M-10 -12h20v8c0 8-4 12-10 12s-10-4-10-12zM0 8v6M-6 14h12M10 -10c6 0 6 8 0 8M-10 -10c-6 0-6 8 0 8"/>
<circle cx="-0" cy="222" r="1.0"/>
<path transform="translate(19 193) rotate(-21) scale(0.69)" d="M-13 -9h26v18h-26zM-13 -9l13 10 13-10"/>
<path transform="translate(50 197) rotate(-17) scale(0.78)" d="M-13 -9h26v18h-26zM-13 -9l13 10 13-10"/>
<path transform="translate(89 200) rotate(6) scale(0.63)" d="M0 10c-14-8-14-20-6-20 4 0 6 4 6 4s2-4 6-4c8 0 8 12-6 20z"/>
<circle cx="103" cy="215" r="1.4"/>
<path transform="translate(118 201) rotate(-9) scale(0.70)" d="M-14 -8h28a4 4 0 0 1 4 4v10a4 4 0 0 1-4 4h-28a4 4 0 0 1-4-4v-10a4 4 0 0 1 4-4zM-10 1h4M-2 1h4M6 1h4"/>
<circle cx="133" cy="215" r="1.5"/>
<path transform="translate(147 200) rotate(8) scale(0.84)" d="M-10 -10l20 6-8 4-2 10z"/>
<path transform="translate(176 201) rotate(-38) scale(0.63)" d="M-12 8c0-12 6-20 12-20s12 8 12 20zM-12 8h24M-3 12h6"/>
<circle cx="191" cy="220" r="1.7"/>
<path transform="translate(213 195) rotate(-29) scale(0.74)" d="M-10 -10l20 6-8 4-2 10z"/>
<circle cx="228" cy="215" r="1.4"/>
<path transform="translate(242 197) rotate(-6) scale(0.77)" d="M6 -14a14 14 0 1 0 8 22a11 11 0 0 1-8-22z"/>
<circle cx="256" cy="210" r="1.4"/>
<path transform="translate(287 199) rotate(-9) scale(0.62)" d="M-10 -12h20v8c0 8-4 12-10 12s-10-4-10-12zM0 8v6M-6 14h12M10 -10c6 0 6 8 0 8M-10 -10c-6 0-6 8 0 8"/>
<circle cx="306" cy="211" r="1.6"/>
<path transform="translate(312 192) rotate(31) scale(0.71)" d="M-14 -10h20l8 8v14h-28zM6 -10v8h8"/>
<circle cx="328" cy="205" r="1.2"/>
<path transform="translate(353 197) rotate(26) scale(0.62)" d="M-10 -10l20 6-8 4-2 10z"/>
<circle cx="373" cy="215" r="1.4"/>
<path transform="translate(374 197) rotate(15) scale(0.82)" d="M-12 0a12 5 0 1 0 24 0a12 5 0 1 0-24 0M-12 0v8a12 5 0 0 0 24 0v-8"/>
<path transform="translate(415 200) rotate(-13) scale(0.61)" d="M0 -14l3.500 10.500 10.500 3.500-10.500 3.500-3.500 10.500-3.500-10.500-10.500-3.500 10.500-3.500z"/>
<path transform="translate(444 203) rotate(8) scale(0.60)" d="M-12 12v-16l12-10 12 10v16zM-4 12v-9h8v9"/>
<path transform="translate(474 196) rotate(-16) scale(0.71)" d="M-12 8c0-12 6-20 12-20s12 8 12 20zM-12 8h24M-3 12h6"/>
<path transform="translate(518 194) rotate(-16) scale(0.67)" d="M-12 12v-16l12-10 12 10v16zM-4 12v-9h8v9"/>
<circle cx="533" cy="212" r="1.1"/>
</svg>
  </div>
</div>

<!-- ================= Teams window ================= -->
<div id="teams" class="abs" style="left:19px;top:-10px;width:1178px;height:689px;border-radius:0 0 8px 8px;overflow:hidden;box-shadow:0 0 0 1px rgba(0,0,0,.14),0 6px 36px rgba(0,0,0,.22),0 0 60px rgba(0,0,0,.08);background:#fff;font-family:'Liberation Sans',sans-serif">
 <div class="abs" style="left:-19px;top:10px;width:1197px;height:679px">
  <!-- nav rail + chat list -->
  <div class="abs" style="left:19px;top:0;width:58px;height:679px;background:#ebebeb"></div>
  <div class="abs" style="left:77px;top:0;width:329px;height:679px;background:#f5f5f5;border-right:1px solid #e0e0e0"></div>
  <!-- chat rows -->
  <div class="abs" style="left:104px;top:579px;width:31px;height:31px;border-radius:50%;background:radial-gradient(circle at 50% 34%,#d9b9a3 0 6px,#3a3f48 6.5px 7.5px,transparent 8px),linear-gradient(#cfd5db 62%,#2b3140 62%);border:1px solid #d7dbe0"></div>
  <div class="abs" style="left:125px;top:601px;width:10px;height:10px;border-radius:50%;background:#13a10e;border:1px solid #f5f5f5"></div><svg class="abs" style="left:127px;top:604px" width="6" height="5" viewBox="0 0 6 5"><path d="M.8 2.500l1.500 1.500 3-3.200" fill="none" stroke="#fff" stroke-width="1"/></svg>
  <div class="abs" style="left:145px;top:582.5px;font-size:12px;color:#242424;white-space:nowrap;letter-spacing:-0.08px">Dmitriy 932 Client manager</div>
  <div class="abs" style="left:145px;top:596.5px;font-size:10px;color:#616161;white-space:nowrap">спс</div>
  <div class="abs" style="left:359px;top:582px;font-size:10.5px;color:#424242;white-space:nowrap;letter-spacing:-0.2px">17.02</div>

  <div class="abs" style="left:104px;top:623px;width:31px;height:31px;border-radius:50%;overflow:hidden;background:#e9eaec">
    <div class="abs" style="left:0;top:0;width:18px;height:31px;background:radial-gradient(circle at 9px 14px,#e2b89c 0 6.5px,transparent 7px),linear-gradient(#6e4a35 0 9px,#dfe3e8 9px 24px,#2d3342 24px)"></div>
    <div class="abs" style="left:19px;top:0;width:12px;height:15px;background:radial-gradient(circle at 6px 8px,#e4bda4 0 3.5px,transparent 4px),#8c4b2f"></div>
    <div class="abs" style="left:19px;top:16px;width:12px;height:15px;background:radial-gradient(circle at 6px 7px,#e4bda4 0 3.5px,transparent 4px),#9a5636"></div>
  </div>
  <div class="abs" style="left:145px;top:626.5px;font-size:12px;color:#242424;white-space:nowrap;letter-spacing:0">Дожим ВС Токио</div>
  <div class="abs" style="left:145px;top:640.5px;font-size:10px;color:#616161;white-space:nowrap;letter-spacing:0">Andrey Maksim LS: Надіслане зображення</div>
  <div class="abs" style="left:359px;top:626px;font-size:10.5px;color:#424242;white-space:nowrap;letter-spacing:-0.2px">17.02</div>

  <div class="abs" style="left:104px;top:668px;width:31px;height:31px;border-radius:50%;background:radial-gradient(circle at 50% 46%,#ddb79d 0 6px,transparent 6.5px),linear-gradient(#5a3a28 0 10px,#d9dde2 10px);border:1px solid #d7dbe0"></div>
  <div class="abs" style="left:145px;top:669.5px;font-size:12px;color:#242424;white-space:nowrap;letter-spacing:-0.08px">Dmitriy Yuriy 945</div>
  <div class="abs" style="left:359px;top:670px;font-size:10.5px;color:#424242;white-space:nowrap;letter-spacing:-0.2px">17.02</div>

  <!-- header -->
  <div class="abs" style="left:406px;top:34px;width:791px;height:1px;background:#e0e0e0"></div>
  <svg class="abs" style="left:1003px;top:0" width="180" height="18" viewBox="0 0 180 18" fill="none" stroke="#424242" stroke-width="1" stroke-linecap="round" stroke-linejoin="round">
    <path d="M4.5 2.2c.5-.6 1.600-.8 2.200-.2l1.300 3c.2.600 0 1.200-.5 1.600l-1 .8c.3 2 1.800 4.200 3.600 5.300l1.400-.6c.6-.2 1.200 0 1.600.5l1.500 2c.4.600.2 1.400-.4 1.800-1.600 1-3.600.6-5.600-1.200-2.600-2.300-4.400-5.800-4.900-9-.2-1.600.1-3 .8-4z" transform="translate(0,-1)"/>
    <path d="M24.500 8l4 4 4-4"/>
    <circle cx="46" cy="5" r="2.600"/><circle cx="53.500" cy="5.500" r="1.800"/><path d="M41 11.500c0-1.200 1-2 2.200-2h5.600c1.200 0 2.200.8 2.200 2 0 2-2 3.300-5 3.300s-5-1.300-5-3.300z"/>
    <circle cx="53.800" cy="12.800" r="3.400" fill="#242424" stroke="none"/><path d="M53.800 11v3.600M52 12.800h3.600" stroke="#fff" stroke-width="1"/>
    <path d="M69.500 0v17" stroke="#e0e0e0"/>
    <path d="M83.500 2.500h5.500v5.500h-5.500zM83.500 8h5.500v5.500h-5.500zM89 8h5.500v5.500h-5.500z"/><circle cx="93" cy="4.200" r="2.700" fill="#fff"/>
    <circle cx="115" cy="7" r="4.600"/><path d="M118.500 10.500l4 4"/>
    <rect x="137.500" y="3" width="12.500" height="10.500" rx="2"/><path d="M145.500 3v10.500M140 8.200h3.800M141.500 6.500l-1.700 1.700 1.700 1.700"/>
    <circle cx="167" cy="8.500" r=".9" fill="#424242"/><circle cx="171.500" cy="8.500" r=".9" fill="#424242"/><circle cx="176" cy="8.500" r=".9" fill="#424242"/>
  </svg>

  <!-- message area -->
  <div class="abs" style="left:500px;top:79px;width:478px;height:99px;background:#f2f2f2;border-radius:6px"></div>
  <div class="abs" style="left:600px;top:103px;font-size:12px;color:#4f52b2;text-decoration:underline;white-space:nowrap;width:224px;text-align:right;letter-spacing:-0.12px">0a1c8e7d44b2f21f2f922</div>
  <div class="abs" style="left:500px;top:126px;width:290px;height:40px;background:#f6f6f6;border:1px solid #e4e4e4;border-radius:5px;box-shadow:0 1px 2px rgba(0,0,0,.08)"></div>
  <div class="abs" style="left:500px;top:221px;width:478px;height:31px;background:#f2f2f2;border-radius:6px"></div>
  <div class="abs" style="left:600px;top:229px;font-size:12px;color:#242424;white-space:nowrap;width:245px;text-align:right">і коммунікація</div>

  <div class="abs" style="left:1000px;top:263px;width:136px;text-align:right;font-size:10px;color:#424242;white-space:nowrap;letter-spacing:-0.18px">22.12.2025 15:41</div>
  <div class="abs" style="left:700px;top:277px;width:437px;height:123px;background:#e8ebfa;border-radius:6px"></div>
  <div class="abs" style="left:600px;top:285px;width:283px;text-align:right;font-size:12px;color:#4f52b2;text-decoration:underline;white-space:nowrap;letter-spacing:-0.1px">t.me/TerekhovMikhail</div>
  <div class="abs" style="left:720px;top:306px;width:403px;height:81px;background:#fafafa;border-radius:4px;box-shadow:0 1px 2px rgba(0,0,0,.22),0 0 1px rgba(0,0,0,.2);overflow:hidden">
    <div class="abs" style="left:0;top:0;width:114px;height:81px;background:#efefef"></div>
  </div>
  <div class="abs" style="left:650px;top:306px;width:176px;font-size:12px;line-height:17px;color:#4f52b2;white-space:nowrap">
    <div class="abs" style="right:15px;top:1px">попередній</div>
    <div class="abs" style="right:16px;top:18px">перегляд URL-</div>
    <div class="abs" style="right:34px;top:35px">адреси для</div>
    <div class="abs" style="right:1px;top:52px;letter-spacing:-0.3px">Terekhov</div>
  </div>
  <div class="abs" style="left:844px;top:314px;font-size:11.5px;font-weight:bold;color:#242424;white-space:nowrap;letter-spacing:-0.15px">Mikhail Terekhov Lawyer</div>
  <div class="abs" style="left:844px;top:329.5px;font-size:10.1px;line-height:14px;color:#242424;white-space:nowrap;letter-spacing:0">Professional Support for Citizenship Applications and Legal<br>Matters Your Trusted Partner for Citizenship.</div>
  <div class="abs" style="left:844px;top:368px;font-size:10px;color:#424242;white-space:nowrap;letter-spacing:-0.1px">t.me</div>
  <svg class="abs" style="left:1099px;top:315px" width="11" height="11" viewBox="0 0 11 11"><path d="M.8.8l9.400 9.400M10.200.8L.8 10.200" stroke="#242424" stroke-width="1.100" fill="none"/></svg>

  <div class="abs" style="left:1000px;top:411px;width:136px;text-align:right;font-size:10px;color:#424242;white-space:nowrap;letter-spacing:-0.18px">22.12.2025 17:55</div>
  <div class="abs" style="left:1040px;top:425px;width:97px;height:31px;background:#e8ebfa;border-radius:5px;font-size:12px;color:#242424;text-align:center;line-height:31px;white-space:nowrap">Скинь древо</div>
  <div class="abs" style="left:1071px;top:458px;width:66px;height:31px;background:#e8ebfa;border-radius:5px;font-size:12px;color:#242424;text-align:center;line-height:30px;white-space:nowrap">привет</div>

  <!-- reply quote (clipped) -->
  <div class="abs" style="left:467px;top:547px;width:418px;height:44px;background:#f5f5f5;border-radius:5px 5px 0 0"></div>
  <div class="abs" style="left:479px;top:554px;width:394px;height:37px;background:#fafafa;border:1px solid #ececec;border-bottom:none;border-radius:4px 4px 0 0"></div>
  <div class="abs" style="left:467px;top:578px;width:16px;height:13px;background:#ebebeb"></div><div class="abs" style="left:483px;top:578px;width:2px;height:13px;background:#9a9a9a"></div>
  <div class="abs" style="left:497px;top:579px;height:12px;overflow:hidden;font-size:12px;line-height:14px;color:#242424;white-space:nowrap;letter-spacing:-0.1px">Сидорчук Сергей Владимирович</div>

  <!-- compose -->
  <div class="abs" style="left:467px;top:619px;width:669px;height:40px;background:#fff;border:1px solid #d6d6d6;border-radius:5px"></div>
  <div class="abs" style="left:479px;top:633px;font-size:11.5px;color:#424242;white-space:nowrap;letter-spacing:0.05px">Введіть повідомлення</div>
  <svg class="abs" style="left:990.500px;top:631px" width="136" height="18" viewBox="0 0 136 18" fill="none" stroke="#424242" stroke-width="1" stroke-linecap="round" stroke-linejoin="round">
    <path d="M2.500 11.500l3-8 3 8M3.500 9h4M8 15.500l1-3 5.500-6.500 1.500 1.500-5.500 6.500z"/>
    <circle cx="36" cy="9" r="6.300"/><circle cx="33.800" cy="7.300" r=".6" fill="#424242"/><circle cx="38.200" cy="7.300" r=".6" fill="#424242"/><path d="M33 10.800c1.500 1.800 4.500 1.800 6 0"/>
    <path d="M57 14.800l1-2.800a6 6 0 1 1 2.400 2.200z"/><circle cx="63.500" cy="9" r="2.400"/><path d="M62 11l-1.500 3"/>
    <path d="M90 3v12M84 9h12"/>
    <path d="M108.500 1v16" stroke="#d1d1d1"/>
    <path d="M119.500 3l12 6-12 6 1.800-6zM121.300 9h5"/>
  </svg>
 </div>
</div>

<!-- ================= Downloads popup ================= -->
<div id="dl" class="abs" style="left:832px;top:30px;width:360px;height:214px;background:#2b2b2b;border-radius:7px;box-shadow:0 0 0 1px rgba(0,0,0,.25),0 6px 18px rgba(0,0,0,.4);color:#fff;font-family:'Liberation Sans',sans-serif">
  <div class="abs" style="left:17px;top:17px;font-size:13.5px;font-weight:bold;color:#f2f2f2;white-space:nowrap;letter-spacing:-0.12px">Завантаження</div>
  <svg class="abs" style="left:232px;top:14px" width="116" height="20" viewBox="0 0 116 20" fill="none" stroke="#e6e6e6" stroke-width="1.100" stroke-linecap="round" stroke-linejoin="round">
    <path d="M2.500 5.500c0-1 .7-1.700 1.700-1.700h3.300l1.800 1.700h5.500c1 0 1.700.7 1.700 1.700v7.300c0 1-.7 1.700-1.700 1.700h-10.600c-1 0-1.700-.7-1.700-1.700zM2.500 7.200h4.800l2-1.700"/>
    <circle cx="40.500" cy="8.500" r="4.800"/><path d="M44 12l4.500 4.500"/>
    <circle cx="68.500" cy="10" r="1" fill="#e6e6e6"/><circle cx="73.700" cy="10" r="1" fill="#e6e6e6"/><circle cx="79" cy="10" r="1" fill="#e6e6e6"/>
    <path d="M100 4l12 12M112 4l-12 12"/>
  </svg>
  <div class="abs" style="left:0;top:47px;width:360px;height:1px;background:#3f3f3f"></div>

  <svg class="abs" style="left:15px;top:64px" width="14.500" height="11.500" viewBox="0 0 16 13"><path d="M0 1.200c0-.6.500-1.200 1.200-1.200h3.800l1.500 1.500h8.300c.7 0 1.200.5 1.200 1.200v8.800c0 .7-.5 1.200-1.200 1.200h-13.600c-.7 0-1.200-.5-1.200-1.200z" fill="#e9a31a"/><path d="M0 4h16v7.500c0 .7-.5 1.200-1.200 1.200h-13.600c-.7 0-1.200-.5-1.200-1.200z" fill="#fcd667"/><rect x="0" y="7" width="16" height="1.500" fill="#9c9c9c" opacity=".75"/></svg>
  <div class="abs" style="left:42px;top:64px;font-size:12.5px;color:#fff;white-space:nowrap;letter-spacing:-0.35px">Гой Анна (2).7z</div>
  <div class="abs" style="left:42px;top:83.5px;font-size:10.500px;color:#fff;white-space:nowrap;border-bottom:1px solid #fff;line-height:12px;letter-spacing:-0.42px">Відкрити файл</div>

  <div class="abs" style="left:15px;top:123px;width:14px;height:10px;border:1px solid #e6e6e6;background:#1a1a1a;color:#fff;font-size:7px;font-weight:bold;line-height:8px;text-align:center;letter-spacing:-0.5px">7z</div>
  <div class="abs" style="left:42px;top:123px;font-size:12.5px;color:#fff;white-space:nowrap;letter-spacing:-0.37px">Малюга Ирина Василиевна (2).zip</div>
  <div class="abs" style="left:42px;top:142.5px;font-size:10.500px;color:#fff;white-space:nowrap;border-bottom:1px solid #fff;line-height:12px;letter-spacing:-0.42px">Відкрити файл</div>

  <div class="abs" style="left:19px;top:185px;font-size:13.5px;font-weight:bold;color:#ededed;white-space:nowrap;letter-spacing:-0.15px">Показати більше</div>
</div>

<!-- ================= WhatsApp window ================= -->
<div id="wa" class="abs" style="left:0;top:0;width:775px;height:585px;background:#1d1f1f;border-radius:0 0 8px 0;overflow:hidden;box-shadow:0 0 0 1px rgba(0,0,0,.3),0 6px 22px rgba(0,0,0,.3),0 0 50px rgba(0,0,0,.10);font-family:'Liberation Sans',sans-serif;color:#fff">
  <!-- title bar -->
  <svg class="abs" style="left:6px;top:3px" width="20" height="20" viewBox="0 0 24 24"><path d="M12 1.800a10.200 10.200 0 0 0-8.800 15.400l-1.400 5.200 5.300-1.400a10.200 10.200 0 1 0 4.900-19.200z" fill="none" stroke="#25d366" stroke-width="2.200"/><path d="M8.700 6.600c-.3-.6-.5-.6-.8-.6h-.7c-.3 0-.7.100-1 .5-.4.400-1.300 1.300-1.300 3.100s1.300 3.600 1.500 3.800c.2.300 2.600 4.100 6.400 5.600 3.100 1.200 3.800 1 4.400.9.700-.1 2.200-.9 2.500-1.700.3-.9.300-1.600.2-1.700-.1-.2-.3-.300-.700-.500l-2.500-1.200c-.4-.1-.6-.2-.9.200l-1.200 1.500c-.2.200-.4.300-.8.100-2.200-1.100-3.600-2-5-4.500-.4-.6.400-.6 1.100-2 .1-.2.100-.5 0-.7z" fill="#25d366" transform="translate(.6,.4) scale(.88)"/></svg>
  <div class="abs" style="left:36px;top:6px;font-size:12px;color:#fff;white-space:nowrap;letter-spacing:0.05px">WhatsApp</div>
  <svg class="abs" style="left:650px;top:0" width="120" height="18" viewBox="0 0 120 18" fill="none" stroke="#8b8d8d" stroke-width="1"><path d="M4 8.500h10.500"/><rect x="51.500" y="4.500" width="9" height="9" rx="1"/><path d="M97 3.500l10 10M107 3.500l-10 10"/></svg>

  <!-- main panel -->
  <div class="abs" style="left:55px;top:31px;width:730px;height:560px;background:#161717;border:1px solid #2e3030;border-radius:9px 0 0 0"></div>
  <div class="abs" style="left:324px;top:32px;width:1px;height:553px;background:#2a2c2c"></div>

  <!-- sidebar -->
  <div class="abs" style="left:3px;top:42px;width:40px;height:40px;border-radius:50%;background:#2b2d2d"></div>
  <svg class="abs" style="left:11px;top:52px" width="24" height="22" viewBox="0 0 24 22"><path d="M1 2.500h19.500c1.400 0 2.500 1.100 2.500 2.500v11.500c0 1.400-1.100 2.500-2.500 2.500h-14c-1.400 0-2.500-1.100-2.500-2.500v-10.500z" fill="#fff"/><rect x="7.500" y="7.500" width="12" height="2" rx="1" fill="#2b2d2d"/><rect x="7.500" y="11.800" width="8" height="2" rx="1" fill="#2b2d2d"/></svg>
  <svg class="abs" style="left:13px;top:97px" width="20" height="20" viewBox="0 0 24 24" fill="none" stroke="#a9abab" stroke-width="2" stroke-linejoin="round"><path d="M3.500 3h4.500l1.500 5-2.800 2.200c1.500 3 3.600 5.100 6.600 6.600l2.200-2.800 5 1.500v4.500c0 .5-.5 1-1 1-9 0-16.500-7.500-16.500-16.500 0-.5.500-1 1-1z"/></svg>
  <svg class="abs" style="left:11px;top:139px" width="24" height="24" viewBox="0 0 24 24" fill="none" stroke="#a9abab" stroke-width="2" stroke-linecap="round"><circle cx="12" cy="12" r="4.600"/><path d="M4.200 16.500a9 9 0 0 1 3.300-12.300M10.500 3.100a9 9 0 0 1 9.300 13.400M17.500 19.100a9 9 0 0 1-11 0"/></svg>
  <svg class="abs" style="left:11px;top:183px" width="24" height="24" viewBox="0 0 24 24" fill="none" stroke="#a9abab" stroke-width="2" stroke-linecap="round" stroke-linejoin="round"><path d="M3 20.500l1.300-4.200a9 9 0 1 1 3.400 3.200z"/><circle cx="12" cy="12" r="1" fill="#a9abab"/><path d="M8.700 9.500a4 4 0 0 0 0 5M15.300 9.500a4 4 0 0 1 0 5"/></svg>
  <svg class="abs" style="left:9px;top:227px" width="28" height="22" viewBox="0 0 28 22" fill="none" stroke="#a9abab" stroke-width="2" stroke-linecap="round" stroke-linejoin="round"><circle cx="14" cy="6.500" r="3"/><circle cx="5.300" cy="8.300" r="2"/><circle cx="22.700" cy="8.300" r="2"/><path d="M8 19v-1.500c0-2.200 2.700-3.500 6-3.500s6 1.300 6 3.500v1.500zM1.500 19v-1.200c0-1.600 1.400-2.600 3.500-2.800M26.500 19v-1.200c0-1.600-1.400-2.600-3.500-2.800"/></svg>
  <svg class="abs" style="left:12px;top:436px" width="24" height="24" viewBox="0 0 24 24" fill="none" stroke="#a9abab" stroke-width="1.800" stroke-linejoin="round"><rect x="6.500" y="2.500" width="15" height="15" rx="1.500"/><path d="M2.500 6.500v13.500c0 .8.700 1.500 1.500 1.500h13.500M8.500 14.500l3.500-4 2.500 3 1.800-2 3.200 3z"/></svg>
  <div class="abs" style="left:3px;top:477px;width:40px;height:1px;background:#343636"></div>
  <svg class="abs" style="left:11px;top:497px" width="24" height="24" viewBox="0 0 24 24" fill="none" stroke="#a9abab" stroke-width="2" stroke-linejoin="round"><circle cx="12" cy="12" r="3.200"/><path d="M10 2.500h4l.6 2.600 1.700.9 2.500-.8 2 3.400-1.900 1.800v2l1.900 1.800-2 3.400-2.500-.8-1.700.9-.6 2.600h-4l-.6-2.600-1.700-.9-2.500.8-2-3.400 1.900-1.800v-2l-1.900-1.800 2-3.400 2.500.8 1.700-.9z"/></svg>
  <div class="abs" style="left:9px;top:539px;width:28px;height:28px;border-radius:50%;background:#3b3533;overflow:hidden"><div class="abs" style="left:0;top:0;width:28px;height:9px;background:#4a4441"></div><div class="abs" style="left:8px;top:10px;width:14px;height:7px;background:#d8d2ca;transform:rotate(-18deg);opacity:.85"></div><div class="abs" style="left:15px;top:15px;width:10px;height:5px;background:#e6e1da;transform:rotate(12deg);opacity:.8"></div><div class="abs" style="left:2px;top:12px;width:7px;height:6px;background:#8a4a3a;opacity:.9"></div><div class="abs" style="left:5px;top:20px;width:12px;height:5px;background:#cfc8bf;opacity:.55;transform:rotate(-10deg)"></div><div class="abs" style="left:17px;top:4px;width:6px;height:6px;background:#b9b2a8;opacity:.6"></div></div>

  <!-- chat list header -->
  <div class="abs" style="left:76px;top:51px;font-size:22px;color:#fff;white-space:nowrap;letter-spacing:.25px">Чаты</div>
  <svg class="abs" style="left:224px;top:51px" width="24" height="24" viewBox="0 0 24 24" fill="none" stroke="#fff" stroke-width="2" stroke-linejoin="round"><path d="M2 3.500h17.500c1.100 0 2 .9 2 2v11.500c0 1.100-.9 2-2 2h-12.500c-1.100 0-2-.9-2-2v-10.500z"/><path d="M12.500 7.500v7.500M8.700 11.200h7.600" stroke-width="1.800"/></svg>
  <svg class="abs" style="left:281px;top:53px" width="6" height="20" viewBox="0 0 6 20" fill="#fff"><circle cx="3" cy="4" r="1.900"/><circle cx="3" cy="10" r="1.900"/><circle cx="3" cy="16" r="1.900"/></svg>

  <!-- search -->
  <div class="abs" style="left:76px;top:95px;width:228px;height:40px;border-radius:20px;background:#2e2f2f"></div>
  <svg class="abs" style="left:92px;top:107px" width="16" height="16" viewBox="0 0 16 16" fill="none" stroke="#b4b6b6" stroke-width="1.800" stroke-linecap="round"><circle cx="6.300" cy="6.300" r="4.500"/><path d="M10 10l4.500 4.500"/></svg>
  <div class="abs" style="left:122px;top:106px;font-size:15px;color:#a9abab;white-space:nowrap;letter-spacing:0.25px">Поиск или новый чат</div>

  <!-- chips -->
  <div class="abs chip" style="left:76px;top:145px;width:50px;height:32px;border-radius:16px;background:#103629;color:#d9fdd3;font-weight:bold;font-size:14px;line-height:32px;text-align:center;letter-spacing:-0.2px">Все</div>
  <div class="abs chip" style="left:134px;top:145px;width:131px;height:32px;border-radius:16px;border:1px solid #323434;color:#b9bbbb;font-weight:bold;font-size:14px;line-height:30px;text-align:center;letter-spacing:-0.3px">Непрочитанное</div>
  <div class="abs chip" style="left:76px;top:185px;width:99px;height:32px;border-radius:16px;border:1px solid #323434;color:#b9bbbb;font-weight:bold;font-size:14px;line-height:30px;text-align:center;letter-spacing:-0.3px">Избранное</div>
  <div class="abs chip" style="left:183px;top:185px;width:76px;height:32px;border-radius:16px;border:1px solid #323434;color:#b9bbbb;font-weight:bold;font-size:14px;line-height:30px;text-align:center;letter-spacing:-0.3px">Группы</div>

  <!-- chat rows -->
  <div class="abs" style="left:66px;top:227px;width:238px;height:72px;border-radius:12px;background:#2e2f2f"></div>
  <div class="abs" style="left:79px;top:238px;width:49px;height:49px;border-radius:50%;background:#2f3131;border:1px solid #3d3f3f"></div><svg class="abs" style="left:89.500px;top:247px" width="28" height="28" viewBox="0 0 24 24"><circle cx="12" cy="8" r="4" fill="#aeb0b0"/><path d="M4 19.200c0-3.400 4.600-5 8-5s8 1.600 8 5v.8h-16z" fill="#aeb0b0"/></svg>
  <div class="abs nm" style="left:143px;top:243px">+7 917 545-4...</div><div class="abs tm" style="left:259px;top:247px">12:20</div>
  <svg class="abs" style="left:143.500px;top:267px" width="15.500" height="15.500" viewBox="0 0 24 24" fill="#a9abab"><path d="M19.200 15.300l-2.500-.3c-.6-.1-1.200.1-1.600.6l-1.800 1.800c-2.800-1.400-5.200-3.800-6.600-6.600l1.800-1.800c.4-.4.600-1 .6-1.600l-.3-2.500c-.1-1-1-1.800-2-1.800h-1.800c-1.100 0-2.100 1-2 2.100.5 8.600 7.400 15.500 16 16 1.100.1 2.100-.9 2.100-2v-1.800c0-1.100-.8-1.900-1.900-2.100z"/><path d="M14 10l6.500-6.500M15.500 3h5.500v5.500" fill="none" stroke="#a9abab" stroke-width="2.200"/></svg><div class="abs sb c" style="left:164px;top:267px">Аудиозвонок</div>
  <div class="abs" style="left:79px;top:314px;width:49px;height:49px;border-radius:50%;background:#272929;border:1px solid #3a3c3c"></div><svg class="abs" style="left:89.500px;top:323px" width="28" height="28" viewBox="0 0 24 24"><circle cx="12" cy="8" r="4" fill="#aeb0b0"/><path d="M4 19.200c0-3.400 4.600-5 8-5s8 1.600 8 5v.8h-16z" fill="#aeb0b0"/></svg>
  <div class="abs nm" style="left:143px;top:319px">+380 98 007 ...</div><div class="abs tm" style="left:259px;top:323px">12:10</div>
  <svg class="abs" style="left:143.500px;top:343px" width="15.500" height="15.500" viewBox="0 0 24 24" fill="#a9abab"><path d="M19.200 15.300l-2.500-.3c-.6-.1-1.200.1-1.600.6l-1.800 1.800c-2.800-1.400-5.200-3.800-6.600-6.600l1.800-1.800c.4-.4.600-1 .6-1.600l-.3-2.500c-.1-1-1-1.800-2-1.800h-1.800c-1.100 0-2.100 1-2 2.100.5 8.600 7.400 15.500 16 16 1.100.1 2.100-.9 2.100-2v-1.800c0-1.100-.8-1.900-1.900-2.100z"/><path d="M14 10l6.500-6.500M15.500 3h5.500v5.500" fill="none" stroke="#a9abab" stroke-width="2.200"/></svg><div class="abs sb c" style="left:164px;top:343px">Аудиозвонок</div>
  <div class="abs" style="left:79px;top:390px;width:49px;height:49px;border-radius:50%;background:#272929;border:1px solid #3a3c3c"></div><svg class="abs" style="left:89.500px;top:399px" width="28" height="28" viewBox="0 0 24 24"><circle cx="12" cy="8" r="4" fill="#aeb0b0"/><path d="M4 19.200c0-3.400 4.600-5 8-5s8 1.600 8 5v.8h-16z" fill="#aeb0b0"/></svg>
  <div class="abs nm" style="left:143px;top:395px">+49 1573 981...</div><div class="abs tm" style="left:259px;top:399px">12:02</div>
  <svg class="abs" style="left:145px;top:422px" width="13" height="11" viewBox="0 0 13 11"><path d="M1 6l3.500 3.500L12 1.500" fill="none" stroke="#a9abab" stroke-width="1.500"/></svg><div class="abs sb" style="left:163px;top:418px">Ирина, можете п...</div>
  <svg class="abs" style="left:79px;top:466px" width="49" height="49" viewBox="0 0 49 49"><defs><clipPath id="c4"><circle cx="24.500" cy="24.500" r="24.500"/></clipPath><filter id="b4"><feGaussianBlur stdDeviation=".5"/></filter></defs><g clip-path="url(#c4)" filter="url(#b4)">
    <rect width="49" height="49" fill="#e4e7ea"/>
    <path d="M0 14l10-2 12 1 14-2 13 2v6h-49z" fill="#8fa3b4"/>
    <rect x="0" y="17" width="49" height="18" fill="#8db7ce"/>
    <path d="M30 22c3-6 9-8 13-5 4 0 6 4 6 8v24h-19z" fill="#4f7d3a"/>
    <path d="M0 36c4-4 9-3 12 0 4-2 8 0 10 3l27 0v10h-49z" fill="#5b8a3f"/>
    <path d="M22 49l24-12 3 3v9z" fill="#8b6a60"/>
    <path d="M36 24c3-3 8-2 10 1-2 5-7 6-10 4z" fill="#3f6a30"/>
    <rect x="18.500" y="38" width="11" height="11" fill="#1f2f4e"/>
    <path d="M17.500 17.500c1-2 4-2.500 6.500-2.500s5.500.5 6.500 2.500l1.500 12-2 1-1 8h-10l-1-8-2-1z" fill="#8d94d2"/>
    <circle cx="24" cy="10.300" r="3.300" fill="#d3ac95"/>
  </g></svg>
  <div class="abs nm" style="left:143px;top:471px">+7 917 502-9...</div><div class="abs tm" style="left:259px;top:475px">11:57</div>
  <svg class="abs" style="left:143px;top:498px" width="18" height="11" viewBox="0 0 18 11"><path d="M1 6.500l3.200 3.200L11.500 1.200M6.500 8l1.800 1.700L16.500 1.200" fill="none" stroke="#53bdeb" stroke-width="1.400"/></svg><div class="abs sb" style="left:163px;top:494px">Константин, Ва...</div>
  <svg class="abs" style="left:79px;top:542px" width="49" height="49" viewBox="0 0 49 49"><defs><clipPath id="c5"><circle cx="24.500" cy="24.500" r="24.500"/></clipPath></defs><g clip-path="url(#c5)" filter="url(#b4)">
    <rect width="49" height="49" fill="#e3e6e8"/>
    <path d="M20 30h29v19h-29z" fill="#b9c2c6"/>
    <path d="M0 14c3-5 9-7 13-6 5-2 9 2 10 7 2 4 2 9 1 14l-24 3z" fill="#3f5f3e"/>
    <path d="M31 23c3-4 7-4 10-3 4-1 7 1 8 3v7l-18 1z" fill="#44653f"/>
    <path d="M33 31l16 1v6l-14-3z" fill="#5d7258"/>
    <path d="M0 32l18-3 3 5-21 9z" fill="#a9a093"/>
    <path d="M0 40l22-7 2 3-24 10z" fill="#6d6a64"/>
    <path d="M4 44l38-2v3l-38 2z" fill="#dfe2e4"/>
    <path d="M16 36c1-2 4-3 7.500-3s6.500 1 7.500 3l1 13h-17z" fill="#1b1b1e"/>
    <path d="M16.500 42.500c3-1.500 11-1.500 14 0l-.5 2.500c-4 1.200-9 1.200-13 0z" fill="#c9a089"/>
    <circle cx="23.300" cy="28.500" r="2.900" fill="#cfa48d"/>
  </g></svg>
  <div class="abs nm" style="left:143px;top:547px">Andrey1</div><div class="abs tm" style="left:259px;top:551px">11:51</div>
  <svg class="abs" style="left:143.500px;top:571px" width="15.500" height="15.500" viewBox="0 0 24 24" fill="#a9abab"><path d="M19.200 15.300l-2.500-.3c-.6-.1-1.200.1-1.600.6l-1.800 1.800c-2.800-1.400-5.200-3.800-6.600-6.600l1.800-1.800c.4-.4.600-1 .6-1.600l-.3-2.500c-.1-1-1-1.800-2-1.800h-1.800c-1.100 0-2.100 1-2 2.100.5 8.600 7.400 15.500 16 16 1.100.1 2.100-.9 2.100-2v-1.800c0-1.100-.8-1.900-1.900-2.100z"/><path d="M21 3.500l-6.500 6.500M20 10.500h-5.500v-5.500" fill="none" stroke="#a9abab" stroke-width="2.200"/></svg><div class="abs sb c" style="left:164px;top:571px">Аудиозвонок</div>
  <!-- list scrollbar -->
  <div class="abs" style="left:315px;top:227px;width:0;height:0;border-left:3px solid transparent;border-right:3px solid transparent;border-bottom:4px solid #5b5d5d"></div>
  <div class="abs" style="left:316px;top:234px;width:5px;height:13px;border-radius:3px;background:#555757"></div>
  <div class="abs" style="left:315px;top:577px;width:0;height:0;border-left:3px solid transparent;border-right:3px solid transparent;border-top:4px solid #5b5d5d"></div>

  <!-- chat header -->
  <div class="abs" style="left:340px;top:43px;width:40px;height:40px;border-radius:50%;background:#282a2a;border:1px solid #3a3c3c"></div>
  <svg class="abs" style="left:348.500px;top:51.500px" width="23" height="23" viewBox="0 0 24 24"><circle cx="12" cy="8" r="4" fill="#aeb0b0"/><path d="M4 19.200c0-3.400 4.600-5 8-5s8 1.600 8 5v.8h-16z" fill="#aeb0b0"/></svg>
  <div class="abs" style="left:394px;top:54px;font-size:16px;color:#fff;white-space:nowrap;letter-spacing:.15px;-webkit-text-stroke:.55px #fff">+7 917 545-47-50</div>
  <div class="abs" style="left:573px;top:43px;width:82px;height:40px;border-radius:20px;border:1px solid #353737"></div>
  <svg class="abs" style="left:590px;top:54px" width="20" height="17" viewBox="0 0 20 17" fill="none" stroke="#fff" stroke-width="2" stroke-linejoin="round"><rect x="1.500" y="2.500" width="12" height="12" rx="1.500"/><path d="M13.500 7l5-3.500v10l-5-3.500z" fill="#fff" stroke-width="1"/></svg>
  <div class="abs" style="left:624px;top:61px;width:0;height:0;border-left:4px solid transparent;border-right:4px solid transparent;border-top:4.500px solid #fff"></div>
  <svg class="abs" style="left:681px;top:53px" width="20" height="20" viewBox="0 0 20 20" fill="none" stroke="#fff" stroke-width="2.200" stroke-linecap="round"><circle cx="7.500" cy="7.500" r="5.500"/><path d="M12 12l6 6"/></svg>
  <svg class="abs" style="left:736px;top:53px" width="6" height="20" viewBox="0 0 6 20" fill="#fff"><circle cx="3" cy="4" r="1.900"/><circle cx="3" cy="10" r="1.900"/><circle cx="3" cy="16" r="1.900"/></svg>

  <!-- chat body -->
  <div id="wabody" class="abs" style="left:325px;top:95px;width:450px;height:490px;overflow:hidden;background:#161717">
    <svg class="abs" style="left:0;top:0" width="450" height="490" viewBox="0 0 450 490" fill="none" stroke="#242626" stroke-width="1.500" stroke-linecap="round" stroke-linejoin="round">
<path transform="translate(-29 -8) rotate(-26) scale(1.17)" d="M0 -14l3.500 10.500 10.500 3.500-10.500 3.500-3.500 10.500-3.500-10.500-10.500-3.500 10.500-3.500z"/>
<circle cx="-3" cy="22" r="2.3"/>
<path transform="translate(16 -2) rotate(-24) scale(1.05)" d="M6 -14a14 14 0 1 0 8 22a11 11 0 0 1-8-22z"/>
<circle cx="42" cy="29" r="2.9"/>
<path transform="translate(77 -10) rotate(-29) scale(1.24)" d="M-10 -12h20v8c0 8-4 12-10 12s-10-4-10-12zM0 8v6M-6 14h12M10 -10c6 0 6 8 0 8M-10 -10c-6 0-6 8 0 8"/>
<circle cx="106" cy="13" r="2.2"/>
<path transform="translate(117 -4) rotate(-22) scale(1.06)" d="M-8 -2v-5a8 8 0 0 1 16 0v5M-11 -2h22v14h-22z"/>
<circle cx="140" cy="21" r="2.1"/>
<path transform="translate(165 -6) rotate(19) scale(1.15)" d="M0 -12v24M-12 0h24M-8 -8l16 16M8 -8l-16 16"/>
<circle cx="195" cy="17" r="2.4"/>
<path transform="translate(218 6) rotate(3) scale(1.04)" d="M-14 -8h28a4 4 0 0 1 4 4v10a4 4 0 0 1-4 4h-28a4 4 0 0 1-4-4v-10a4 4 0 0 1 4-4zM-10 1h4M-2 1h4M6 1h4"/>
<path transform="translate(280 -5) rotate(-20) scale(1.03)" d="M-14 -8h28a4 4 0 0 1 4 4v10a4 4 0 0 1-4 4h-28a4 4 0 0 1-4-4v-10a4 4 0 0 1 4-4zM-10 1h4M-2 1h4M6 1h4"/>
<circle cx="303" cy="26" r="2.6"/>
<path transform="translate(335 -9) rotate(5) scale(0.95)" d="M0 -12v24M-12 0h24M-8 -8l16 16M8 -8l-16 16"/>
<circle cx="360" cy="19" r="2.1"/>
<path transform="translate(366 -5) rotate(-28) scale(1.13)" d="M-14 -8h28a4 4 0 0 1 4 4v10a4 4 0 0 1-4 4h-28a4 4 0 0 1-4-4v-10a4 4 0 0 1 4-4zM-10 1h4M-2 1h4M6 1h4"/>
<circle cx="392" cy="22" r="2.7"/>
<path transform="translate(430 9) rotate(-33) scale(1.22)" d="M0 -13a13 13 0 1 0 .1 0M-5 -3a1 1 0 1 0 .1 0M5 -3a1 1 0 1 0 .1 0M-6 4c3 4 9 4 12 0"/>
<circle cx="456" cy="33" r="2.3"/>
<path transform="translate(470 5) rotate(15) scale(1.21)" d="M-10 -12h20v8c0 8-4 12-10 12s-10-4-10-12zM0 8v6M-6 14h12M10 -10c6 0 6 8 0 8M-10 -10c-6 0-6 8 0 8"/>
<circle cx="491" cy="29" r="2.4"/>
<path transform="translate(-8 48) rotate(0) scale(1.12)" d="M0 -12v24M-12 0h24M-8 -8l16 16M8 -8l-16 16"/>
<path transform="translate(54 47) rotate(-16) scale(0.84)" d="M6 -14a14 14 0 1 0 8 22a11 11 0 0 1-8-22z"/>
<circle cx="81" cy="67" r="3.2"/>
<path transform="translate(93 45) rotate(18) scale(1.04)" d="M-14 6c-4-8 2-14 8-12 4-8 16-6 16 2 6 0 8 10 0 10z"/>
<circle cx="116" cy="66" r="3.3"/>
<path transform="translate(160 53) rotate(23) scale(1.20)" d="M0 -14l3.500 10.500 10.500 3.500-10.500 3.500-3.500 10.500-3.500-10.500-10.500-3.500 10.500-3.500z"/>
<circle cx="189" cy="82" r="2.6"/>
<path transform="translate(198 41) rotate(-28) scale(0.89)" d="M-10 -12h20v8c0 8-4 12-10 12s-10-4-10-12zM0 8v6M-6 14h12M10 -10c6 0 6 8 0 8M-10 -10c-6 0-6 8 0 8"/>
<path transform="translate(249 41) rotate(-22) scale(0.80)" d="M0 -14l3.500 10.500 10.500 3.500-10.500 3.500-3.500 10.500-3.500-10.500-10.500-3.500 10.500-3.500z"/>
<circle cx="269" cy="65" r="2.0"/>
<path transform="translate(308 53) rotate(-3) scale(1.23)" d="M-14 6c-4-8 2-14 8-12 4-8 16-6 16 2 6 0 8 10 0 10z"/>
<circle cx="333" cy="73" r="2.7"/>
<path transform="translate(361 50) rotate(-25) scale(0.86)" d="M-12 8c0-12 6-20 12-20s12 8 12 20zM-12 8h24M-3 12h6"/>
<circle cx="388" cy="74" r="3.0"/>
<path transform="translate(400 44) rotate(11) scale(0.87)" d="M-12 0a12 5 0 1 0 24 0a12 5 0 1 0-24 0M-12 0v8a12 5 0 0 0 24 0v-8"/>
<circle cx="420" cy="69" r="3.5"/>
<path transform="translate(458 54) rotate(31) scale(0.97)" d="M-14 -10h20l8 8v14h-28zM6 -10v8h8"/>
<circle cx="486" cy="80" r="3.2"/>
<path transform="translate(496 44) rotate(-5) scale(1.17)" d="M-12 12l12-26 12 26M-7 3h14"/>
<circle cx="518" cy="69" r="2.5"/>
<path transform="translate(-35 90) rotate(25) scale(0.92)" d="M-14 -10h20l8 8v14h-28zM6 -10v8h8"/>
<circle cx="-5" cy="114" r="3.4"/>
<path transform="translate(36 110) rotate(-25) scale(0.90)" d="M0 -13a13 13 0 1 0 .1 0M-5 -3a1 1 0 1 0 .1 0M5 -3a1 1 0 1 0 .1 0M-6 4c3 4 9 4 12 0"/>
<circle cx="57" cy="131" r="2.9"/>
<path transform="translate(84 107) rotate(9) scale(1.16)" d="M-10 -10l20 6-8 4-2 10z"/>
<circle cx="111" cy="137" r="3.2"/>
<path transform="translate(131 100) rotate(20) scale(1.16)" d="M-8 -2v-5a8 8 0 0 1 16 0v5M-11 -2h22v14h-22z"/>
<circle cx="159" cy="130" r="2.6"/>
<path transform="translate(173 110) rotate(-14) scale(1.25)" d="M-8 -2v-5a8 8 0 0 1 16 0v5M-11 -2h22v14h-22z"/>
<circle cx="199" cy="134" r="3.0"/>
<path transform="translate(227 102) rotate(9) scale(0.87)" d="M-10 -10l20 6-8 4-2 10z"/>
<circle cx="247" cy="131" r="3.1"/>
<path transform="translate(266 105) rotate(20) scale(1.24)" d="M-14 6c-4-8 2-14 8-12 4-8 16-6 16 2 6 0 8 10 0 10z"/>
<circle cx="296" cy="125" r="2.3"/>
<path transform="translate(325 106) rotate(-2) scale(1.04)" d="M-13 -9h26v18h-26zM-13 -9l13 10 13-10"/>
<path transform="translate(365 105) rotate(31) scale(0.99)" d="M-14 4l10-12 8 8 10-14M14 -14v8M14 -14h-8"/>
<path transform="translate(425 101) rotate(30) scale(0.81)" d="M-12 0a12 5 0 1 0 24 0a12 5 0 1 0-24 0M-12 0v8a12 5 0 0 0 24 0v-8"/>
<circle cx="446" cy="120" r="3.2"/>
<path transform="translate(468 99) rotate(-28) scale(0.95)" d="M0 10c-14-8-14-20-6-20 4 0 6 4 6 4s2-4 6-4c8 0 8 12-6 20z"/>
<circle cx="493" cy="128" r="2.2"/>
<path transform="translate(1 144) rotate(-30) scale(1.15)" d="M-14 -10h20l8 8v14h-28zM6 -10v8h8"/>
<circle cx="27" cy="173" r="3.4"/>
<path transform="translate(49 152) rotate(30) scale(0.89)" d="M-12 0a12 5 0 1 0 24 0a12 5 0 1 0-24 0M-12 0v8a12 5 0 0 0 24 0v-8"/>
<circle cx="74" cy="181" r="2.8"/>
<path transform="translate(94 151) rotate(-10) scale(1.18)" d="M-14 -10h20l8 8v14h-28zM6 -10v8h8"/>
<circle cx="115" cy="175" r="2.1"/>
<path transform="translate(144 141) rotate(-20) scale(1.20)" d="M-12 8c0-12 6-20 12-20s12 8 12 20zM-12 8h24M-3 12h6"/>
<circle cx="172" cy="168" r="2.2"/>
<path transform="translate(208 160) rotate(-23) scale(0.98)" d="M6 -14a14 14 0 1 0 8 22a11 11 0 0 1-8-22z"/>
<circle cx="239" cy="189" r="2.2"/>
<path transform="translate(248 150) rotate(18) scale(0.89)" d="M-13 -9h26v18h-26zM-13 -9l13 10 13-10"/>
<circle cx="276" cy="170" r="2.8"/>
<path transform="translate(299 139) rotate(31) scale(1.08)" d="M-13 -9h26v18h-26zM-13 -9l13 10 13-10"/>
<circle cx="318" cy="170" r="3.2"/>
<path transform="translate(360 141) rotate(-1) scale(0.82)" d="M-14 -10h20l8 8v14h-28zM6 -10v8h8"/>
<circle cx="383" cy="162" r="2.6"/>
<path transform="translate(409 157) rotate(16) scale(0.87)" d="M-14 -10h20l8 8v14h-28zM6 -10v8h8"/>
<path transform="translate(452 154) rotate(0) scale(0.83)" d="M-14 -8h28a4 4 0 0 1 4 4v10a4 4 0 0 1-4 4h-28a4 4 0 0 1-4-4v-10a4 4 0 0 1 4-4zM-10 1h4M-2 1h4M6 1h4"/>
<circle cx="476" cy="174" r="3.4"/>
<path transform="translate(503 157) rotate(-7) scale(0.83)" d="M-14 -8h28a4 4 0 0 1 4 4v10a4 4 0 0 1-4 4h-28a4 4 0 0 1-4-4v-10a4 4 0 0 1 4-4zM-10 1h4M-2 1h4M6 1h4"/>
<path transform="translate(-26 196) rotate(18) scale(1.22)" d="M0 -12v24M-12 0h24M-8 -8l16 16M8 -8l-16 16"/>
<circle cx="-5" cy="222" r="2.4"/>
<path transform="translate(16 193) rotate(-12) scale(0.89)" d="M0 -14l3.500 10.500 10.500 3.500-10.500 3.500-3.500 10.500-3.500-10.500-10.500-3.500 10.500-3.500z"/>
<circle cx="39" cy="221" r="2.4"/>
<path transform="translate(75 193) rotate(-33) scale(1.25)" d="M0 -13a13 13 0 1 0 .1 0M-5 -3a1 1 0 1 0 .1 0M5 -3a1 1 0 1 0 .1 0M-6 4c3 4 9 4 12 0"/>
<circle cx="94" cy="218" r="3.5"/>
<path transform="translate(125 194) rotate(-22) scale(1.10)" d="M-14 4l10-12 8 8 10-14M14 -14v8M14 -14h-8"/>
<circle cx="152" cy="220" r="3.3"/>
<path transform="translate(185 196) rotate(-6) scale(0.95)" d="M-12 12l12-26 12 26M-7 3h14"/>
<path transform="translate(230 203) rotate(9) scale(1.24)" d="M-10 -12h20v8c0 8-4 12-10 12s-10-4-10-12zM0 8v6M-6 14h12M10 -10c6 0 6 8 0 8M-10 -10c-6 0-6 8 0 8"/>
<path transform="translate(264 203) rotate(20) scale(0.87)" d="M-14 -10h20l8 8v14h-28zM6 -10v8h8"/>
<circle cx="293" cy="232" r="3.0"/>
<path transform="translate(320 194) rotate(-30) scale(1.01)" d="M-12 8c0-12 6-20 12-20s12 8 12 20zM-12 8h24M-3 12h6"/>
<circle cx="345" cy="216" r="3.4"/>
<path transform="translate(385 201) rotate(-31) scale(1.23)" d="M6 -14a14 14 0 1 0 8 22a11 11 0 0 1-8-22z"/>
<circle cx="409" cy="220" r="2.6"/>
<path transform="translate(424 200) rotate(-4) scale(1.03)" d="M-12 12l12-26 12 26M-7 3h14"/>
<circle cx="447" cy="220" r="2.6"/>
<path transform="translate(465 189) rotate(-6) scale(0.84)" d="M-12 8c0-12 6-20 12-20s12 8 12 20zM-12 8h24M-3 12h6"/>
<path transform="translate(8 242) rotate(6) scale(1.12)" d="M-10 -12h20v8c0 8-4 12-10 12s-10-4-10-12zM0 8v6M-6 14h12M10 -10c6 0 6 8 0 8M-10 -10c-6 0-6 8 0 8"/>
<circle cx="30" cy="269" r="2.2"/>
<path transform="translate(57 255) rotate(19) scale(1.13)" d="M-12 0a12 5 0 1 0 24 0a12 5 0 1 0-24 0M-12 0v8a12 5 0 0 0 24 0v-8"/>
<path transform="translate(92 251) rotate(-33) scale(1.17)" d="M-12 0a12 5 0 1 0 24 0a12 5 0 1 0-24 0M-12 0v8a12 5 0 0 0 24 0v-8"/>
<circle cx="122" cy="278" r="3.0"/>
<path transform="translate(144 240) rotate(11) scale(1.23)" d="M-14 6c-4-8 2-14 8-12 4-8 16-6 16 2 6 0 8 10 0 10z"/>
<circle cx="168" cy="259" r="2.0"/>
<path transform="translate(201 244) rotate(-35) scale(1.01)" d="M-14 -10h20l8 8v14h-28zM6 -10v8h8"/>
<circle cx="231" cy="274" r="2.1"/>
<path transform="translate(251 255) rotate(-3) scale(1.16)" d="M-10 -10l20 6-8 4-2 10z"/>
<path transform="translate(294 256) rotate(23) scale(1.02)" d="M6 -14a14 14 0 1 0 8 22a11 11 0 0 1-8-22z"/>
<circle cx="319" cy="283" r="3.2"/>
<path transform="translate(353 253) rotate(-17) scale(0.95)" d="M-14 -8h28a4 4 0 0 1 4 4v10a4 4 0 0 1-4 4h-28a4 4 0 0 1-4-4v-10a4 4 0 0 1 4-4zM-10 1h4M-2 1h4M6 1h4"/>
<circle cx="380" cy="280" r="2.2"/>
<path transform="translate(400 250) rotate(-8) scale(1.10)" d="M0 10c-14-8-14-20-6-20 4 0 6 4 6 4s2-4 6-4c8 0 8 12-6 20z"/>
<circle cx="425" cy="274" r="2.7"/>
<path transform="translate(442 259) rotate(4) scale(1.24)" d="M-12 12l12-26 12 26M-7 3h14"/>
<path transform="translate(489 249) rotate(22) scale(1.25)" d="M-12 0a12 5 0 1 0 24 0a12 5 0 1 0-24 0M-12 0v8a12 5 0 0 0 24 0v-8"/>
<circle cx="519" cy="279" r="2.1"/>
<path transform="translate(-34 305) rotate(11) scale(0.86)" d="M-14 -10h20l8 8v14h-28zM6 -10v8h8"/>
<path transform="translate(25 309) rotate(-6) scale(1.02)" d="M0 -13a13 13 0 1 0 .1 0M-5 -3a1 1 0 1 0 .1 0M5 -3a1 1 0 1 0 .1 0M-6 4c3 4 9 4 12 0"/>
<path transform="translate(73 292) rotate(22) scale(0.98)" d="M-10 -10l20 6-8 4-2 10z"/>
<circle cx="97" cy="316" r="2.2"/>
<path transform="translate(121 296) rotate(15) scale(0.85)" d="M-13 -9h26v18h-26zM-13 -9l13 10 13-10"/>
<path transform="translate(180 309) rotate(-3) scale(0.97)" d="M-12 8c0-12 6-20 12-20s12 8 12 20zM-12 8h24M-3 12h6"/>
<circle cx="211" cy="335" r="2.5"/>
<path transform="translate(223 295) rotate(0) scale(0.85)" d="M0 -14l3.500 10.500 10.500 3.500-10.500 3.500-3.500 10.500-3.500-10.500-10.500-3.500 10.500-3.500z"/>
<path transform="translate(270 310) rotate(-1) scale(1.00)" d="M6 -14a14 14 0 1 0 8 22a11 11 0 0 1-8-22z"/>
<circle cx="299" cy="338" r="2.6"/>
<path transform="translate(315 306) rotate(35) scale(1.05)" d="M-10 -12h20v8c0 8-4 12-10 12s-10-4-10-12zM0 8v6M-6 14h12M10 -10c6 0 6 8 0 8M-10 -10c-6 0-6 8 0 8"/>
<circle cx="334" cy="334" r="2.7"/>
<path transform="translate(381 303) rotate(27) scale(0.82)" d="M-12 8c0-12 6-20 12-20s12 8 12 20zM-12 8h24M-3 12h6"/>
<path transform="translate(417 299) rotate(1) scale(0.93)" d="M-13 -9h26v18h-26zM-13 -9l13 10 13-10"/>
<circle cx="448" cy="322" r="3.0"/>
<path transform="translate(471 301) rotate(-20) scale(0.88)" d="M-10 -12h20v8c0 8-4 12-10 12s-10-4-10-12zM0 8v6M-6 14h12M10 -10c6 0 6 8 0 8M-10 -10c-6 0-6 8 0 8"/>
<circle cx="492" cy="331" r="2.7"/>
<path transform="translate(-6 359) rotate(19) scale(0.86)" d="M-14 4l10-12 8 8 10-14M14 -14v8M14 -14h-8"/>
<circle cx="14" cy="382" r="2.1"/>
<path transform="translate(44 345) rotate(-33) scale(1.14)" d="M-12 12l12-26 12 26M-7 3h14"/>
<circle cx="68" cy="370" r="2.6"/>
<path transform="translate(96 340) rotate(11) scale(0.86)" d="M-14 -10h20l8 8v14h-28zM6 -10v8h8"/>
<circle cx="123" cy="370" r="2.3"/>
<path transform="translate(145 344) rotate(22) scale(0.99)" d="M-10 -12h20v8c0 8-4 12-10 12s-10-4-10-12zM0 8v6M-6 14h12M10 -10c6 0 6 8 0 8M-10 -10c-6 0-6 8 0 8"/>
<circle cx="174" cy="375" r="2.2"/>
<path transform="translate(198 356) rotate(27) scale(0.80)" d="M-10 -10l20 6-8 4-2 10z"/>
<circle cx="228" cy="385" r="3.3"/>
<path transform="translate(260 344) rotate(-7) scale(0.87)" d="M0 10c-14-8-14-20-6-20 4 0 6 4 6 4s2-4 6-4c8 0 8 12-6 20z"/>
<circle cx="288" cy="375" r="3.1"/>
<path transform="translate(303 356) rotate(-25) scale(1.05)" d="M-14 4l10-12 8 8 10-14M14 -14v8M14 -14h-8"/>
<circle cx="332" cy="378" r="3.4"/>
<path transform="translate(353 346) rotate(-3) scale(1.04)" d="M-14 6c-4-8 2-14 8-12 4-8 16-6 16 2 6 0 8 10 0 10z"/>
<circle cx="381" cy="366" r="2.5"/>
<path transform="translate(410 343) rotate(-7) scale(1.16)" d="M-14 -10h20l8 8v14h-28zM6 -10v8h8"/>
<circle cx="435" cy="374" r="2.4"/>
<path transform="translate(446 357) rotate(25) scale(1.04)" d="M6 -14a14 14 0 1 0 8 22a11 11 0 0 1-8-22z"/>
<circle cx="465" cy="381" r="3.0"/>
<path transform="translate(490 343) rotate(-25) scale(0.92)" d="M-12 12v-16l12-10 12 10v16zM-4 12v-9h8v9"/>
<circle cx="520" cy="365" r="2.1"/>
<path transform="translate(-29 398) rotate(-10) scale(0.80)" d="M-10 -12h20v8c0 8-4 12-10 12s-10-4-10-12zM0 8v6M-6 14h12M10 -10c6 0 6 8 0 8M-10 -10c-6 0-6 8 0 8"/>
<circle cx="1" cy="418" r="2.7"/>
<path transform="translate(18 406) rotate(-6) scale(1.01)" d="M-12 12l12-26 12 26M-7 3h14"/>
<circle cx="48" cy="426" r="2.9"/>
<path transform="translate(77 409) rotate(18) scale(1.21)" d="M-10 -10l20 6-8 4-2 10z"/>
<circle cx="104" cy="439" r="2.1"/>
<path transform="translate(115 402) rotate(-29) scale(1.12)" d="M-12 12v-16l12-10 12 10v16zM-4 12v-9h8v9"/>
<circle cx="139" cy="430" r="2.5"/>
<path transform="translate(166 391) rotate(7) scale(0.89)" d="M-8 -2v-5a8 8 0 0 1 16 0v5M-11 -2h22v14h-22z"/>
<circle cx="192" cy="415" r="2.5"/>
<path transform="translate(230 407) rotate(21) scale(0.88)" d="M-13 -9h26v18h-26zM-13 -9l13 10 13-10"/>
<circle cx="252" cy="431" r="3.4"/>
<path transform="translate(267 410) rotate(13) scale(0.96)" d="M-12 12l12-26 12 26M-7 3h14"/>
<path transform="translate(332 399) rotate(25) scale(0.89)" d="M0 -14l3.500 10.500 10.500 3.500-10.500 3.500-3.500 10.500-3.500-10.500-10.500-3.500 10.500-3.500z"/>
<circle cx="356" cy="421" r="3.1"/>
<path transform="translate(374 403) rotate(16) scale(0.82)" d="M6 -14a14 14 0 1 0 8 22a11 11 0 0 1-8-22z"/>
<circle cx="394" cy="433" r="2.4"/>
<path transform="translate(430 409) rotate(11) scale(0.92)" d="M-13 -9h26v18h-26zM-13 -9l13 10 13-10"/>
<path transform="translate(478 395) rotate(0) scale(0.93)" d="M-13 -9h26v18h-26zM-13 -9l13 10 13-10"/>
<circle cx="504" cy="423" r="3.4"/>
<path transform="translate(-10 457) rotate(25) scale(1.12)" d="M0 10c-14-8-14-20-6-20 4 0 6 4 6 4s2-4 6-4c8 0 8 12-6 20z"/>
<circle cx="19" cy="486" r="3.4"/>
<path transform="translate(57 442) rotate(-12) scale(0.80)" d="M-10 -10l20 6-8 4-2 10z"/>
<path transform="translate(96 454) rotate(-5) scale(0.95)" d="M-14 6c-4-8 2-14 8-12 4-8 16-6 16 2 6 0 8 10 0 10z"/>
<circle cx="119" cy="483" r="2.1"/>
<path transform="translate(143 456) rotate(17) scale(0.83)" d="M6 -14a14 14 0 1 0 8 22a11 11 0 0 1-8-22z"/>
<circle cx="169" cy="478" r="3.5"/>
<path transform="translate(208 461) rotate(-25) scale(0.89)" d="M-14 -10h20l8 8v14h-28zM6 -10v8h8"/>
<circle cx="239" cy="491" r="2.3"/>
<path transform="translate(242 449) rotate(33) scale(1.18)" d="M6 -14a14 14 0 1 0 8 22a11 11 0 0 1-8-22z"/>
<circle cx="262" cy="478" r="2.4"/>
<path transform="translate(301 447) rotate(-10) scale(1.00)" d="M-14 -10h20l8 8v14h-28zM6 -10v8h8"/>
<circle cx="323" cy="470" r="3.4"/>
<path transform="translate(343 440) rotate(-4) scale(1.03)" d="M-14 -10h20l8 8v14h-28zM6 -10v8h8"/>
<circle cx="372" cy="467" r="3.5"/>
<path transform="translate(391 449) rotate(22) scale(1.21)" d="M6 -14a14 14 0 1 0 8 22a11 11 0 0 1-8-22z"/>
<circle cx="414" cy="470" r="2.3"/>
<path transform="translate(460 452) rotate(12) scale(1.03)" d="M-14 -8h28a4 4 0 0 1 4 4v10a4 4 0 0 1-4 4h-28a4 4 0 0 1-4-4v-10a4 4 0 0 1 4-4zM-10 1h4M-2 1h4M6 1h4"/>
<circle cx="487" cy="480" r="3.0"/>
<path transform="translate(489 453) rotate(-8) scale(0.82)" d="M0 -13a13 13 0 1 0 .1 0M-5 -3a1 1 0 1 0 .1 0M5 -3a1 1 0 1 0 .1 0M-6 4c3 4 9 4 12 0"/>
<circle cx="509" cy="484" r="2.1"/>
<path transform="translate(-20 509) rotate(6) scale(0.98)" d="M-12 -6a12 12 0 1 1 4 14M-4 2a5 5 0 1 1 3 4"/>
<circle cx="7" cy="529" r="2.0"/>
<path transform="translate(25 500) rotate(-23) scale(1.16)" d="M-12 12v-16l12-10 12 10v16zM-4 12v-9h8v9"/>
<circle cx="46" cy="525" r="3.0"/>
<path transform="translate(73 495) rotate(4) scale(0.99)" d="M-12 8c0-12 6-20 12-20s12 8 12 20zM-12 8h24M-3 12h6"/>
<circle cx="101" cy="525" r="2.6"/>
<path transform="translate(114 506) rotate(-10) scale(0.98)" d="M0 -13a13 13 0 1 0 .1 0M-5 -3a1 1 0 1 0 .1 0M5 -3a1 1 0 1 0 .1 0M-6 4c3 4 9 4 12 0"/>
<circle cx="145" cy="530" r="2.2"/>
<path transform="translate(166 491) rotate(23) scale(1.15)" d="M0 -13a13 13 0 1 0 .1 0M-5 -3a1 1 0 1 0 .1 0M5 -3a1 1 0 1 0 .1 0M-6 4c3 4 9 4 12 0"/>
<circle cx="186" cy="512" r="3.2"/>
<path transform="translate(223 502) rotate(29) scale(0.88)" d="M0 -13a13 13 0 1 0 .1 0M-5 -3a1 1 0 1 0 .1 0M5 -3a1 1 0 1 0 .1 0M-6 4c3 4 9 4 12 0"/>
<circle cx="244" cy="523" r="2.1"/>
<path transform="translate(272 506) rotate(3) scale(0.86)" d="M-12 12l12-26 12 26M-7 3h14"/>
<path transform="translate(335 500) rotate(14) scale(0.84)" d="M0 -14l3.500 10.500 10.500 3.500-10.500 3.500-3.500 10.500-3.500-10.500-10.500-3.500 10.500-3.500z"/>
<circle cx="363" cy="529" r="3.0"/>
<path transform="translate(383 503) rotate(25) scale(0.88)" d="M-12 12l12-26 12 26M-7 3h14"/>
<circle cx="407" cy="528" r="2.6"/>
<path transform="translate(417 494) rotate(-30) scale(1.20)" d="M-12 12l12-26 12 26M-7 3h14"/>
<path transform="translate(479 504) rotate(-20) scale(0.98)" d="M-13 -9h26v18h-26zM-13 -9l13 10 13-10"/>
<circle cx="508" cy="532" r="3.0"/>
</svg>
    <!-- document image -->
    <div class="abs" style="left:63px;top:-6px;width:242px;height:292px;border-radius:7px;overflow:hidden;background:#cdcdd1">
      <div class="abs" style="left:0;top:0;width:242px;height:292px;background:linear-gradient(90deg,#8f9094 0,#b9babd 3px,#c8c8cc 9px,#cfcfd2 70px,#cacace 130px,#d0d0d3 180px,#c8c8cb 228px,#c3c4c6 236px,#9c9e9f 237px,#a9aaab 242px)"></div>
      <div class="abs" style="left:0;top:0;width:242px;height:292px;background:linear-gradient(172deg,rgba(255,255,255,.16) 0,rgba(255,255,255,0) 30%,rgba(110,112,118,.10) 48%,rgba(255,255,255,.07) 62%,rgba(0,0,0,0) 100%)"></div>
      <div class="abs" style="left:0;top:0;width:242px;height:292px;background:linear-gradient(97deg,rgba(0,0,0,0) 0,rgba(0,0,0,0) 40%,rgba(90,92,98,.07) 41%,rgba(0,0,0,0) 55%,rgba(0,0,0,0) 100%)"></div>
      <div class="abs" style="left:0;top:0;width:242px;height:292px;font-size:5.8px;line-height:6px;color:#33353c;font-family:'Liberation Serif',serif;white-space:nowrap">
        <div class="abs" style="left:198.7px;top:5.0px;transform-origin:0 0;transform:rotate(90deg);font-weight:bold">DEX PRO EXPERT SRL</div>
        <div class="abs" style="left:190.6px;top:7.0px;transform-origin:0 0;transform:rotate(90deg);">Unic de Înregistrare: 31552385</div>
        <div class="abs" style="left:181.0px;top:5.0px;transform-origin:0 0;transform:rotate(90deg);">istry No. J40/3157/2013</div>
        <div class="abs" style="left:171.0px;top:-5.0px;transform-origin:0 0;transform:rotate(90deg);">ess: București, Sector 1, Str. Jandarmeriei, Nr.211</div>
        <div class="abs" style="left:126.0px;top:91.0px;transform-origin:0 0;transform:rotate(90deg);font-weight:bold">Дополнение к договору № 51428201031S</div>
        <div class="abs" style="left:114.8px;top:8.0px;transform-origin:0 0;transform:rotate(90deg);">11.2024 "Заказчик", Наталия Любовь Владимировна (паспорт № 808594293б), оплатила стоимость услуг</div>
        <div class="abs" style="left:107.0px;top:8.0px;transform-origin:0 0;transform:rotate(90deg);">ясно договору № 51428201031S в размере 650 (шестьсот пятьдесят) Евро для выполнения уполномоченным</div>
        <div class="abs" style="left:99.0px;top:8.0px;transform-origin:0 0;transform:rotate(90deg);word-spacing:4.2px">м "Агента" указанных средств на расчётный счёт "Агента" со стороны "Заказчика".</div>
        <div class="abs" style="left:69.7px;top:2.0px;transform-origin:0 0;transform:rotate(90deg);letter-spacing:.35px">: _________ (semnatura)</div>
        <div class="abs" style="left:69.7px;top:126.0px;transform-origin:0 0;transform:rotate(90deg);letter-spacing:-0.1px">Reprezentant al companiei: __________ (semnatura)</div>
      </div>
      <svg class="abs" style="left:48px;top:184px" width="50" height="44" viewBox="0 0 50 44" fill="none" stroke="#3555a6" stroke-width="1.400"><circle cx="28" cy="24" r="16.500"/><circle cx="28" cy="24" r="11" stroke-width=".8"/><path d="M2 12c8 6 18 12 30 26M18 14l6 16 12-10M20 20c6-2 10 2 14 8" stroke-width="1"/></svg>
      <div class="abs" style="left:237px;top:120px;width:5px;height:8px;border-radius:4px 0 0 4px;background:#58b05c"></div>
      <div class="abs" style="left:237px;top:248px;width:5px;height:3px;background:#7db37c"></div>
      <div class="abs" style="left:0;top:244px;width:242px;height:48px;background:linear-gradient(rgba(60,62,66,0),rgba(60,62,66,.4) 50%,rgba(48,50,54,.72))"></div>
      <div class="abs" style="left:206px;top:274px;font-size:12px;color:#fff;font-family:'Liberation Sans',sans-serif;letter-spacing:-0.2px;line-height:14px;-webkit-text-stroke:.35px #fff">12:17</div>
    </div>
    <!-- forward button -->
    <div class="abs" style="left:313px;top:114px;width:24px;height:24px;border-radius:50%;background:#1f2121"></div>
    <svg class="abs" style="left:317px;top:120px" width="17" height="12" viewBox="0 0 17 12" fill="none" stroke="#d5d7d7" stroke-width="1.500" stroke-linecap="round" stroke-linejoin="round"><path d="M1 11c.5-4 3-6 8-6M6.500 1.500l3.500 3.500-3.500 3.500M11.500 1.500l4 3.500-4 3.500"/></svg>

    <!-- outgoing call bubble -->
    <div class="abs" style="left:47px;top:301px;width:336px;height:105px;border-radius:8px 0 8px 8px;background:#144d37"></div>
    <svg class="abs" style="left:382px;top:301px" width="9" height="9" viewBox="0 0 9 9"><path d="M0 0h8.500c.4 0 .6.500.3.800L0 9z" fill="#144d37"/></svg>
    <div class="abs" style="left:52px;top:306px;width:326px;height:75px;border-radius:7px;background:#103629"></div>
    <div class="abs" style="left:64px;top:324px;width:40px;height:40px;border-radius:50%;background:#242626"></div>
    <svg class="abs" style="left:74px;top:333px" width="21" height="21" viewBox="0 0 24 24" fill="#fff"><path d="M19.200 15.300l-2.500-.3c-.6-.1-1.200.1-1.600.6l-1.800 1.800c-2.800-1.400-5.200-3.800-6.600-6.600l1.800-1.800c.4-.4.600-1 .6-1.600l-.3-2.500c-.1-1-1-1.800-2-1.800h-1.800c-1.100 0-2.100 1-2 2.100.5 8.600 7.400 15.500 16 16 1.100.1 2.100-.9 2.100-2v-1.800c0-1.100-.8-1.900-1.900-2.100z"/><path d="M14 10l6.500-6.500M15.500 3h5.500v5.500" fill="none" stroke="#fff" stroke-width="2"/></svg>
    <div class="abs" style="left:116px;top:323px;font-size:16px;color:#fff;white-space:nowrap;letter-spacing:.4px;-webkit-text-stroke:.4px #fff">Аудиозвонок</div>
    <div class="abs" style="left:116px;top:347px;font-size:14px;color:#a8c2b6;white-space:nowrap;letter-spacing:.35px">2 минуты</div>
    <div class="abs" style="left:346.500px;top:389px;font-size:12px;color:#b7d0c4;white-space:nowrap;letter-spacing:-0.2px">12:20</div>

    <!-- composer -->
    <div class="abs" style="left:11px;top:427px;width:427px;height:50px;border-radius:25px;background:#242626"></div>
    <svg class="abs" style="left:29px;top:444px" width="16" height="16" viewBox="0 0 16 16" fill="none" stroke="#fff" stroke-width="1.800"><path d="M8 0v16M0 8h16"/></svg>
    <svg class="abs" style="left:66px;top:441px" width="22" height="22" viewBox="0 0 22 22" fill="none" stroke="#fff" stroke-width="1.900" stroke-linejoin="round" stroke-linecap="round"><path d="M11 1.500a9.500 9.500 0 1 0 9.500 9.500c0-.8-.1-1.600-.3-2.300l-6.900-6.900c-.7-.2-1.500-.3-2.300-.3z" transform="rotate(90 11 11)"/><path d="M12 20.500v-4c0-2.200 1.800-4 4-4h4.300" /><circle cx="7.500" cy="9" r="1.200" fill="#fff" stroke="none"/><circle cx="13.500" cy="9" r="1.200" fill="#fff" stroke="none"/><path d="M6.500 13.500c1 1.500 3 2 4.500 1.500"/></svg>
    <div class="abs" style="left:102px;top:443px;font-size:15px;color:#a9abab;white-space:nowrap;letter-spacing:.08px">Введите сообщение</div>
    <svg class="abs" style="left:404px;top:441px" width="16" height="22" viewBox="0 0 16 22" fill="none" stroke="#fff" stroke-width="1.800" stroke-linecap="round"><rect x="5" y="1.500" width="6" height="11.500" rx="3" fill="#fff"/><path d="M1.800 10.500a6.200 6.200 0 0 0 12.400 0M8 17v4"/></svg>

    <!-- chat scrollbar -->
    
    <div class="abs" style="left:442px;top:2px;width:0;height:0;border-left:3.500px solid transparent;border-right:3.500px solid transparent;border-bottom:5px solid #4b4d4d"></div>
    <div class="abs" style="left:443px;top:322px;width:5px;height:92px;border-radius:3px;background:#3c3e3e"></div>
    <div class="abs" style="left:442px;top:417px;width:0;height:0;border-left:3.500px solid transparent;border-right:3.500px solid transparent;border-top:5px solid #4b4d4d"></div>
  </div>

</div>


</body>
</html>
